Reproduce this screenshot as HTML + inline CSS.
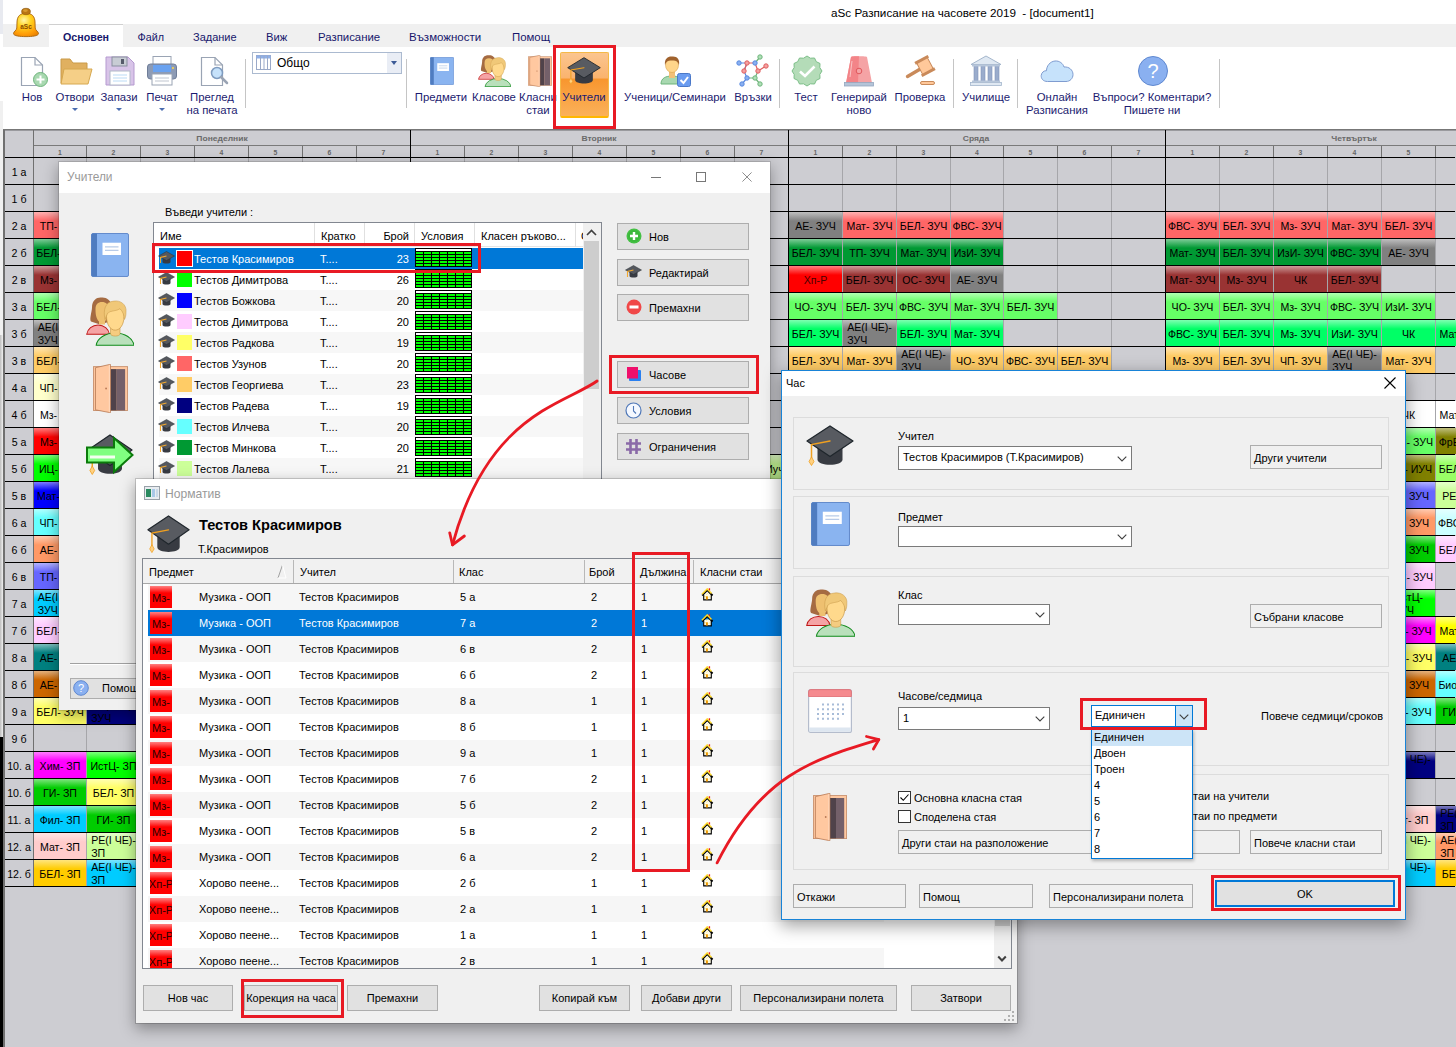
<!DOCTYPE html>
<html lang="bg"><head><meta charset="utf-8"><title>aSc Разписание на часовете 2019</title><style>
*{box-sizing:border-box;margin:0;padding:0}
html,body{width:1456px;height:1047px;overflow:hidden;background:#fff}
body{position:relative;font-family:"Liberation Sans",sans-serif;font-size:11px;color:#000}
.a{position:absolute}
.t{position:absolute;white-space:pre;line-height:1}
.rb{position:absolute;white-space:pre;line-height:13px;font-size:11.35px;color:#1b1b70;text-align:center;transform:translateX(-50%)}
.tab{position:absolute;top:24px;height:23px;line-height:27px;font-size:11.7px;color:#17176c;white-space:pre}
.sep{position:absolute;top:59px;height:49px;width:1px;background:#c5c5c5}
.gc{position:absolute;height:26px;padding-top:2px;font-size:10.6px;line-height:13px;color:#000;display:flex;align-items:center;justify-content:center;text-align:center;white-space:pre;overflow:hidden}
.gl{position:absolute;left:5px;width:28px;height:26px;font-size:10.6px;line-height:28px;text-align:center;white-space:pre}
.hl{position:absolute;background:#000;height:1px}
.btn{position:absolute;background:#e1e1e1;border:1px solid #adadad;font-size:11px;white-space:pre;display:flex;align-items:center}
.btnc{justify-content:center}
.dlg{position:absolute;background:#f0f0f0}
.combo{position:absolute;background:#fff;border:1px solid #7a7a7a;font-size:11px;white-space:pre}
.grp{position:absolute;border:1px solid #dcdcdc}
</style></head><body>
<div class="a" style="left:3px;top:129px;width:1453px;height:918px;background:#cdcdd2"></div>
<div class="a" style="left:0;top:101px;width:3px;height:234px;background:#f0f0f0;z-index:2"></div>
<div class="a" style="left:0;top:335px;width:3px;height:402px;background:linear-gradient(to right,#bdbdbd,#f0f0f0)"></div>
<div class="a" style="left:0;top:737px;width:3px;height:310px;background:#000"></div>
<div class="a" style="left:3px;top:129px;width:2px;height:918px;background:#707070"></div>
<div class="a" style="left:3px;top:129px;width:1453px;height:1px;background:#777"></div>
<div class="a" style="left:5px;top:130px;width:1451px;height:1px;background:#9a9a9e"></div>
<div class="a" style="left:33px;top:130px;width:1px;height:757px;background:#707070"></div>
<div class="a" style="left:34px;top:145px;width:1422px;height:1px;background:#7a7a7a"></div>
<div class="t" style="left:222px;top:136px;font-size:6.8px;font-weight:bold;color:#6a6a6a;transform:translateX(-50%) scaleX(1.25)">Понеделник</div>
<div class="a" style="left:410px;top:130px;width:1px;height:757px;background:#000"></div>
<div class="t" style="left:599px;top:136px;font-size:6.8px;font-weight:bold;color:#6a6a6a;transform:translateX(-50%) scaleX(1.25)">Вторник</div>
<div class="a" style="left:788px;top:130px;width:1px;height:757px;background:#000"></div>
<div class="t" style="left:976px;top:136px;font-size:6.8px;font-weight:bold;color:#6a6a6a;transform:translateX(-50%) scaleX(1.25)">Сряда</div>
<div class="a" style="left:1165px;top:130px;width:1px;height:757px;background:#000"></div>
<div class="t" style="left:1354px;top:136px;font-size:6.8px;font-weight:bold;color:#6a6a6a;transform:translateX(-50%) scaleX(1.25)">Четвъртък</div>
<div class="t" style="left:60px;top:150px;font-size:6.8px;font-weight:bold;color:#666;transform:translateX(-50%)">1</div>
<div class="a" style="left:86px;top:146px;width:1px;height:11px;background:#707070"></div>
<div class="a" style="left:86px;top:158px;width:1px;height:729px;background:#a6a6aa"></div>
<div class="t" style="left:113.5px;top:150px;font-size:6.8px;font-weight:bold;color:#666;transform:translateX(-50%)">2</div>
<div class="a" style="left:140px;top:146px;width:1px;height:11px;background:#707070"></div>
<div class="a" style="left:140px;top:158px;width:1px;height:729px;background:#a6a6aa"></div>
<div class="t" style="left:167.5px;top:150px;font-size:6.8px;font-weight:bold;color:#666;transform:translateX(-50%)">3</div>
<div class="a" style="left:194px;top:146px;width:1px;height:11px;background:#707070"></div>
<div class="a" style="left:194px;top:158px;width:1px;height:729px;background:#a6a6aa"></div>
<div class="t" style="left:221.5px;top:150px;font-size:6.8px;font-weight:bold;color:#666;transform:translateX(-50%)">4</div>
<div class="a" style="left:248px;top:146px;width:1px;height:11px;background:#707070"></div>
<div class="a" style="left:248px;top:158px;width:1px;height:729px;background:#a6a6aa"></div>
<div class="t" style="left:275.5px;top:150px;font-size:6.8px;font-weight:bold;color:#666;transform:translateX(-50%)">5</div>
<div class="a" style="left:302px;top:146px;width:1px;height:11px;background:#707070"></div>
<div class="a" style="left:302px;top:158px;width:1px;height:729px;background:#a6a6aa"></div>
<div class="t" style="left:329.5px;top:150px;font-size:6.8px;font-weight:bold;color:#666;transform:translateX(-50%)">6</div>
<div class="a" style="left:356px;top:146px;width:1px;height:11px;background:#707070"></div>
<div class="a" style="left:356px;top:158px;width:1px;height:729px;background:#a6a6aa"></div>
<div class="t" style="left:383.5px;top:150px;font-size:6.8px;font-weight:bold;color:#666;transform:translateX(-50%)">7</div>
<div class="t" style="left:437.5px;top:150px;font-size:6.8px;font-weight:bold;color:#666;transform:translateX(-50%)">1</div>
<div class="a" style="left:464px;top:146px;width:1px;height:11px;background:#707070"></div>
<div class="a" style="left:464px;top:158px;width:1px;height:729px;background:#a6a6aa"></div>
<div class="t" style="left:491.5px;top:150px;font-size:6.8px;font-weight:bold;color:#666;transform:translateX(-50%)">2</div>
<div class="a" style="left:518px;top:146px;width:1px;height:11px;background:#707070"></div>
<div class="a" style="left:518px;top:158px;width:1px;height:729px;background:#a6a6aa"></div>
<div class="t" style="left:545.5px;top:150px;font-size:6.8px;font-weight:bold;color:#666;transform:translateX(-50%)">3</div>
<div class="a" style="left:572px;top:146px;width:1px;height:11px;background:#707070"></div>
<div class="a" style="left:572px;top:158px;width:1px;height:729px;background:#a6a6aa"></div>
<div class="t" style="left:599.5px;top:150px;font-size:6.8px;font-weight:bold;color:#666;transform:translateX(-50%)">4</div>
<div class="a" style="left:626px;top:146px;width:1px;height:11px;background:#707070"></div>
<div class="a" style="left:626px;top:158px;width:1px;height:729px;background:#a6a6aa"></div>
<div class="t" style="left:653.5px;top:150px;font-size:6.8px;font-weight:bold;color:#666;transform:translateX(-50%)">5</div>
<div class="a" style="left:680px;top:146px;width:1px;height:11px;background:#707070"></div>
<div class="a" style="left:680px;top:158px;width:1px;height:729px;background:#a6a6aa"></div>
<div class="t" style="left:707.5px;top:150px;font-size:6.8px;font-weight:bold;color:#666;transform:translateX(-50%)">6</div>
<div class="a" style="left:734px;top:146px;width:1px;height:11px;background:#707070"></div>
<div class="a" style="left:734px;top:158px;width:1px;height:729px;background:#a6a6aa"></div>
<div class="t" style="left:761.5px;top:150px;font-size:6.8px;font-weight:bold;color:#666;transform:translateX(-50%)">7</div>
<div class="t" style="left:815.5px;top:150px;font-size:6.8px;font-weight:bold;color:#666;transform:translateX(-50%)">1</div>
<div class="a" style="left:842px;top:146px;width:1px;height:11px;background:#707070"></div>
<div class="a" style="left:842px;top:158px;width:1px;height:729px;background:#a6a6aa"></div>
<div class="t" style="left:869.5px;top:150px;font-size:6.8px;font-weight:bold;color:#666;transform:translateX(-50%)">2</div>
<div class="a" style="left:896px;top:146px;width:1px;height:11px;background:#707070"></div>
<div class="a" style="left:896px;top:158px;width:1px;height:729px;background:#a6a6aa"></div>
<div class="t" style="left:923.5px;top:150px;font-size:6.8px;font-weight:bold;color:#666;transform:translateX(-50%)">3</div>
<div class="a" style="left:950px;top:146px;width:1px;height:11px;background:#707070"></div>
<div class="a" style="left:950px;top:158px;width:1px;height:729px;background:#a6a6aa"></div>
<div class="t" style="left:977px;top:150px;font-size:6.8px;font-weight:bold;color:#666;transform:translateX(-50%)">4</div>
<div class="a" style="left:1003px;top:146px;width:1px;height:11px;background:#707070"></div>
<div class="a" style="left:1003px;top:158px;width:1px;height:729px;background:#a6a6aa"></div>
<div class="t" style="left:1030.5px;top:150px;font-size:6.8px;font-weight:bold;color:#666;transform:translateX(-50%)">5</div>
<div class="a" style="left:1057px;top:146px;width:1px;height:11px;background:#707070"></div>
<div class="a" style="left:1057px;top:158px;width:1px;height:729px;background:#a6a6aa"></div>
<div class="t" style="left:1084.5px;top:150px;font-size:6.8px;font-weight:bold;color:#666;transform:translateX(-50%)">6</div>
<div class="a" style="left:1111px;top:146px;width:1px;height:11px;background:#707070"></div>
<div class="a" style="left:1111px;top:158px;width:1px;height:729px;background:#a6a6aa"></div>
<div class="t" style="left:1138.5px;top:150px;font-size:6.8px;font-weight:bold;color:#666;transform:translateX(-50%)">7</div>
<div class="t" style="left:1192.5px;top:150px;font-size:6.8px;font-weight:bold;color:#666;transform:translateX(-50%)">1</div>
<div class="a" style="left:1219px;top:146px;width:1px;height:11px;background:#707070"></div>
<div class="a" style="left:1219px;top:158px;width:1px;height:729px;background:#a6a6aa"></div>
<div class="t" style="left:1246.5px;top:150px;font-size:6.8px;font-weight:bold;color:#666;transform:translateX(-50%)">2</div>
<div class="a" style="left:1273px;top:146px;width:1px;height:11px;background:#707070"></div>
<div class="a" style="left:1273px;top:158px;width:1px;height:729px;background:#a6a6aa"></div>
<div class="t" style="left:1300.5px;top:150px;font-size:6.8px;font-weight:bold;color:#666;transform:translateX(-50%)">3</div>
<div class="a" style="left:1327px;top:146px;width:1px;height:11px;background:#707070"></div>
<div class="a" style="left:1327px;top:158px;width:1px;height:729px;background:#a6a6aa"></div>
<div class="t" style="left:1354.5px;top:150px;font-size:6.8px;font-weight:bold;color:#666;transform:translateX(-50%)">4</div>
<div class="a" style="left:1381px;top:146px;width:1px;height:11px;background:#707070"></div>
<div class="a" style="left:1381px;top:158px;width:1px;height:729px;background:#a6a6aa"></div>
<div class="t" style="left:1408.5px;top:150px;font-size:6.8px;font-weight:bold;color:#666;transform:translateX(-50%)">5</div>
<div class="a" style="left:1435px;top:146px;width:1px;height:11px;background:#707070"></div>
<div class="a" style="left:1435px;top:158px;width:1px;height:729px;background:#a6a6aa"></div>
<div class="t" style="left:1462.5px;top:150px;font-size:6.8px;font-weight:bold;color:#666;transform:translateX(-50%)">6</div>
<div class="gc" style="left:34px;top:212px;width:52px;background:linear-gradient(to bottom,#ffb2b2 0,#ff6666 9px);color:#000;">ТП- ЗУЧ</div>
<div class="gc" style="left:789px;top:212px;width:53px;background:linear-gradient(to bottom,#bfbfbf 0,#808080 9px);color:#000;">АЕ- ЗУЧ</div>
<div class="gc" style="left:843px;top:212px;width:53px;background:linear-gradient(to bottom,#ffb2b2 0,#ff6666 9px);color:#000;">Мат- ЗУЧ</div>
<div class="gc" style="left:897px;top:212px;width:53px;background:linear-gradient(to bottom,#ffb2b2 0,#ff6666 9px);color:#000;">БЕЛ- ЗУЧ</div>
<div class="gc" style="left:951px;top:212px;width:52px;background:linear-gradient(to bottom,#ffb2b2 0,#ff6666 9px);color:#000;">ФВС- ЗУЧ</div>
<div class="gc" style="left:1166px;top:212px;width:53px;background:linear-gradient(to bottom,#ffb2b2 0,#ff6666 9px);color:#000;">ФВС- ЗУЧ</div>
<div class="gc" style="left:1220px;top:212px;width:53px;background:linear-gradient(to bottom,#ffb2b2 0,#ff6666 9px);color:#000;">БЕЛ- ЗУЧ</div>
<div class="gc" style="left:1274px;top:212px;width:53px;background:linear-gradient(to bottom,#ffb2b2 0,#ff6666 9px);color:#000;">Мз- ЗУЧ</div>
<div class="gc" style="left:1328px;top:212px;width:53px;background:linear-gradient(to bottom,#ffb2b2 0,#ff6666 9px);color:#000;">Мат- ЗУЧ</div>
<div class="gc" style="left:1382px;top:212px;width:53px;background:linear-gradient(to bottom,#ffb2b2 0,#ff6666 9px);color:#000;">БЕЛ- ЗУЧ</div>
<div class="gc" style="left:34px;top:239px;width:52px;background:linear-gradient(to bottom,#7fcc99 0,#009933 9px);color:#000;">БЕЛ- ЗУЧ</div>
<div class="gc" style="left:789px;top:239px;width:53px;background:linear-gradient(to bottom,#7fcc99 0,#009933 9px);color:#000;">БЕЛ- ЗУЧ</div>
<div class="gc" style="left:843px;top:239px;width:53px;background:linear-gradient(to bottom,#7fcc99 0,#009933 9px);color:#000;">ТП- ЗУЧ</div>
<div class="gc" style="left:897px;top:239px;width:53px;background:linear-gradient(to bottom,#7fcc99 0,#009933 9px);color:#000;">Мат- ЗУЧ</div>
<div class="gc" style="left:951px;top:239px;width:52px;background:linear-gradient(to bottom,#7fcc99 0,#009933 9px);color:#000;">ИзИ- ЗУЧ</div>
<div class="gc" style="left:1166px;top:239px;width:53px;background:linear-gradient(to bottom,#7fcc99 0,#009933 9px);color:#000;">Мат- ЗУЧ</div>
<div class="gc" style="left:1220px;top:239px;width:53px;background:linear-gradient(to bottom,#7fcc99 0,#009933 9px);color:#000;">БЕЛ- ЗУЧ</div>
<div class="gc" style="left:1274px;top:239px;width:53px;background:linear-gradient(to bottom,#7fcc99 0,#009933 9px);color:#000;">ИзИ- ЗУЧ</div>
<div class="gc" style="left:1328px;top:239px;width:53px;background:linear-gradient(to bottom,#7fcc99 0,#009933 9px);color:#000;">ФВС- ЗУЧ</div>
<div class="gc" style="left:1382px;top:239px;width:53px;background:linear-gradient(to bottom,#bfbfbf 0,#808080 9px);color:#000;">АЕ- ЗУЧ</div>
<div class="gc" style="left:34px;top:266px;width:52px;background:linear-gradient(to bottom,#cc9999 0,#993333 9px);color:#000;">Мз- ЗУЧ</div>
<div class="gc" style="left:789px;top:266px;width:53px;background:linear-gradient(to bottom,#ff7f7f 0,#ff0000 9px);color:#4a0000;">Хп-Р</div>
<div class="gc" style="left:843px;top:266px;width:53px;background:linear-gradient(to bottom,#cc9999 0,#993333 9px);color:#000;">БЕЛ- ЗУЧ</div>
<div class="gc" style="left:897px;top:266px;width:53px;background:linear-gradient(to bottom,#cc9999 0,#993333 9px);color:#000;">ОС- ЗУЧ</div>
<div class="gc" style="left:951px;top:266px;width:52px;background:linear-gradient(to bottom,#bfbfbf 0,#808080 9px);color:#000;">АЕ- ЗУЧ</div>
<div class="gc" style="left:1166px;top:266px;width:53px;background:linear-gradient(to bottom,#cc9999 0,#993333 9px);color:#000;">Мат- ЗУЧ</div>
<div class="gc" style="left:1220px;top:266px;width:53px;background:linear-gradient(to bottom,#cc9999 0,#993333 9px);color:#000;">Мз- ЗУЧ</div>
<div class="gc" style="left:1274px;top:266px;width:53px;background:linear-gradient(to bottom,#cc9999 0,#993333 9px);color:#000;">ЧК</div>
<div class="gc" style="left:1328px;top:266px;width:53px;background:linear-gradient(to bottom,#cc9999 0,#993333 9px);color:#000;">БЕЛ- ЗУЧ</div>
<div class="gc" style="left:34px;top:293px;width:52px;background:linear-gradient(to bottom,#b2ffb2 0,#66ff66 9px);color:#000;">БЕЛ- ЗУЧ</div>
<div class="gc" style="left:789px;top:293px;width:53px;background:linear-gradient(to bottom,#b2ffb2 0,#66ff66 9px);color:#000;">ЧО- ЗУЧ</div>
<div class="gc" style="left:843px;top:293px;width:53px;background:linear-gradient(to bottom,#b2ffb2 0,#66ff66 9px);color:#000;">БЕЛ- ЗУЧ</div>
<div class="gc" style="left:897px;top:293px;width:53px;background:linear-gradient(to bottom,#b2ffb2 0,#66ff66 9px);color:#000;">ФВС- ЗУЧ</div>
<div class="gc" style="left:951px;top:293px;width:52px;background:linear-gradient(to bottom,#b2ffb2 0,#66ff66 9px);color:#000;">Мат- ЗУЧ</div>
<div class="gc" style="left:1004px;top:293px;width:53px;background:linear-gradient(to bottom,#b2ffb2 0,#66ff66 9px);color:#000;">БЕЛ- ЗУЧ</div>
<div class="gc" style="left:1166px;top:293px;width:53px;background:linear-gradient(to bottom,#b2ffb2 0,#66ff66 9px);color:#000;">ЧО- ЗУЧ</div>
<div class="gc" style="left:1220px;top:293px;width:53px;background:linear-gradient(to bottom,#b2ffb2 0,#66ff66 9px);color:#000;">БЕЛ- ЗУЧ</div>
<div class="gc" style="left:1274px;top:293px;width:53px;background:linear-gradient(to bottom,#b2ffb2 0,#66ff66 9px);color:#000;">Мз- ЗУЧ</div>
<div class="gc" style="left:1328px;top:293px;width:53px;background:linear-gradient(to bottom,#b2ffb2 0,#66ff66 9px);color:#000;">ФВС- ЗУЧ</div>
<div class="gc" style="left:1382px;top:293px;width:53px;background:linear-gradient(to bottom,#b2ffb2 0,#66ff66 9px);color:#000;">ИзИ- ЗУЧ</div>
<div class="gc" style="left:34px;top:320px;width:52px;background:linear-gradient(to bottom,#bfbfbf 0,#808080 9px);color:#000;text-align:left;">АЕ(I ЧЕ)-
ЗУЧ</div>
<div class="gc" style="left:789px;top:320px;width:53px;background:linear-gradient(to bottom,#7fffb2 0,#00ff66 9px);color:#000;">БЕЛ- ЗУЧ</div>
<div class="gc" style="left:843px;top:320px;width:53px;background:linear-gradient(to bottom,#bfbfbf 0,#808080 9px);color:#000;text-align:left;">АЕ(I ЧЕ)-
ЗУЧ</div>
<div class="gc" style="left:897px;top:320px;width:53px;background:linear-gradient(to bottom,#7fffb2 0,#00ff66 9px);color:#000;">БЕЛ- ЗУЧ</div>
<div class="gc" style="left:951px;top:320px;width:52px;background:linear-gradient(to bottom,#7fffb2 0,#00ff66 9px);color:#000;">Мат- ЗУЧ</div>
<div class="gc" style="left:1166px;top:320px;width:53px;background:linear-gradient(to bottom,#7fffb2 0,#00ff66 9px);color:#000;">ФВС- ЗУЧ</div>
<div class="gc" style="left:1220px;top:320px;width:53px;background:linear-gradient(to bottom,#7fffb2 0,#00ff66 9px);color:#000;">БЕЛ- ЗУЧ</div>
<div class="gc" style="left:1274px;top:320px;width:53px;background:linear-gradient(to bottom,#7fffb2 0,#00ff66 9px);color:#000;">Мз- ЗУЧ</div>
<div class="gc" style="left:1328px;top:320px;width:53px;background:linear-gradient(to bottom,#7fffb2 0,#00ff66 9px);color:#000;">ИзИ- ЗУЧ</div>
<div class="gc" style="left:1382px;top:320px;width:53px;background:linear-gradient(to bottom,#7fffb2 0,#00ff66 9px);color:#000;">ЧК</div>
<div class="gc" style="left:1436px;top:320px;width:53px;background:linear-gradient(to bottom,#7fffb2 0,#00ff66 9px);color:#000;">Мат- ЗУЧ</div>
<div class="gc" style="left:34px;top:347px;width:52px;background:linear-gradient(to bottom,#ffe5b2 0,#ffcc66 9px);color:#000;">БЕЛ- ЗУЧ</div>
<div class="gc" style="left:789px;top:347px;width:53px;background:linear-gradient(to bottom,#ffe5b2 0,#ffcc66 9px);color:#000;">БЕЛ- ЗУЧ</div>
<div class="gc" style="left:843px;top:347px;width:53px;background:linear-gradient(to bottom,#ffe5b2 0,#ffcc66 9px);color:#000;">Мат- ЗУЧ</div>
<div class="gc" style="left:897px;top:347px;width:53px;background:linear-gradient(to bottom,#bfbfbf 0,#808080 9px);color:#000;text-align:left;">АЕ(I ЧЕ)-
ЗУЧ</div>
<div class="gc" style="left:951px;top:347px;width:52px;background:linear-gradient(to bottom,#ffe5b2 0,#ffcc66 9px);color:#000;">ЧО- ЗУЧ</div>
<div class="gc" style="left:1004px;top:347px;width:53px;background:linear-gradient(to bottom,#ffe5b2 0,#ffcc66 9px);color:#000;">ФВС- ЗУЧ</div>
<div class="gc" style="left:1058px;top:347px;width:53px;background:linear-gradient(to bottom,#ffe5b2 0,#ffcc66 9px);color:#000;">БЕЛ- ЗУЧ</div>
<div class="gc" style="left:1166px;top:347px;width:53px;background:linear-gradient(to bottom,#ffe5b2 0,#ffcc66 9px);color:#000;">Мз- ЗУЧ</div>
<div class="gc" style="left:1220px;top:347px;width:53px;background:linear-gradient(to bottom,#ffe5b2 0,#ffcc66 9px);color:#000;">БЕЛ- ЗУЧ</div>
<div class="gc" style="left:1274px;top:347px;width:53px;background:linear-gradient(to bottom,#ffe5b2 0,#ffcc66 9px);color:#000;">ЧП- ЗУЧ</div>
<div class="gc" style="left:1328px;top:347px;width:53px;background:linear-gradient(to bottom,#bfbfbf 0,#808080 9px);color:#000;text-align:left;">АЕ(I ЧЕ)-
ЗУЧ</div>
<div class="gc" style="left:1382px;top:347px;width:53px;background:linear-gradient(to bottom,#ffe5b2 0,#ffcc66 9px);color:#000;">Мат- ЗУЧ</div>
<div class="gc" style="left:34px;top:374px;width:52px;background:linear-gradient(to bottom,#ffffe5 0,#ffffcc 9px);color:#000;">ЧП- ЗУЧ</div>
<div class="gc" style="left:34px;top:401px;width:52px;background:linear-gradient(to bottom,#ffffff 0,#ffffff 9px);color:#000;">Мз- ЗУЧ</div>
<div class="gc" style="left:1382px;top:401px;width:53px;background:linear-gradient(to bottom,#ffffff 0,#ffffff 9px);color:#000;">ЧК</div>
<div class="gc" style="left:1436px;top:401px;width:53px;background:linear-gradient(to bottom,#ffffff 0,#ffffff 9px);color:#000;">Мат- ЗУЧ</div>
<div class="gc" style="left:34px;top:428px;width:52px;background:linear-gradient(to bottom,#ff7f7f 0,#ff0000 9px);color:#000;">Мз- ЗУЧ</div>
<div class="gc" style="left:1382px;top:428px;width:53px;background:linear-gradient(to bottom,#b2ffb2 0,#66ff66 9px);color:#000;">ФВС- ЗУЧ</div>
<div class="gc" style="left:1436px;top:428px;width:53px;background:linear-gradient(to bottom,#bfbf7f 0,#808000 9px);color:#000;">ФрЕ- ЗУЧ</div>
<div class="gc" style="left:34px;top:455px;width:52px;background:linear-gradient(to bottom,#7fff7f 0,#00ff00 9px);color:#000;">ИЦ- ЗУЧ</div>
<div class="gc" style="left:735px;top:455px;width:53px;background:linear-gradient(to bottom,#e5ffcc 0,#ccff99 9px);color:#000;">Мат- Иуч</div>
<div class="gc" style="left:1382px;top:455px;width:53px;background:linear-gradient(to bottom,#bfbf7f 0,#808000 9px);color:#000;">Мат- ИУЧ</div>
<div class="gc" style="left:1436px;top:455px;width:53px;background:linear-gradient(to bottom,#ccffb2 0,#99ff66 9px);color:#000;">БЕЛ- ЗУЧ</div>
<div class="gc" style="left:34px;top:482px;width:52px;background:linear-gradient(to bottom,#7f7fff 0,#0000ff 9px);color:#000;">Мат- ЗУЧ</div>
<div class="gc" style="left:1382px;top:482px;width:53px;background:linear-gradient(to bottom,#b2b2ff 0,#6666ff 9px);color:#000;justify-content:flex-end;padding-right:6px;">БЕЛ-  ЗУЧ</div>
<div class="gc" style="left:1436px;top:482px;width:53px;background:linear-gradient(to bottom,#e5ffcc 0,#ccff99 9px);color:#000;">РЕ- ЗУЧ</div>
<div class="gc" style="left:34px;top:509px;width:52px;background:linear-gradient(to bottom,#b2ffff 0,#66ffff 9px);color:#000;">ЧП- ЗУЧ</div>
<div class="gc" style="left:1382px;top:509px;width:53px;background:linear-gradient(to bottom,#ffccb2 0,#ff9966 9px);color:#000;justify-content:flex-end;padding-right:6px;">БЕЛ-  ЗУЧ</div>
<div class="gc" style="left:1436px;top:509px;width:53px;background:linear-gradient(to bottom,#e5ffff 0,#ccffff 9px);color:#000;">ФВС- ЗУЧ</div>
<div class="gc" style="left:34px;top:536px;width:52px;background:linear-gradient(to bottom,#ffccb2 0,#ff9966 9px);color:#000;">АЕ- ЗУЧ</div>
<div class="gc" style="left:1382px;top:536px;width:53px;background:linear-gradient(to bottom,#7fe57f 0,#00cc00 9px);color:#000;justify-content:flex-end;padding-right:6px;">БЕЛ-  ЗУЧ</div>
<div class="gc" style="left:1436px;top:536px;width:53px;background:linear-gradient(to bottom,#ffe5ff 0,#ffccff 9px);color:#000;">БЕЛ- ЗУЧ</div>
<div class="gc" style="left:34px;top:563px;width:52px;background:linear-gradient(to bottom,#b2b2ff 0,#6666ff 9px);color:#000;">ТП- ЗУЧ</div>
<div class="gc" style="left:1382px;top:563px;width:53px;background:linear-gradient(to bottom,#ffe5ff 0,#ffccff 9px);color:#000;">ФВС- ЗУЧ</div>
<div class="gc" style="left:34px;top:590px;width:52px;background:linear-gradient(to bottom,#7fe5ff 0,#00ccff 9px);color:#000;text-align:left;">АЕ(I ЧЕ)-
ЗУЧ</div>
<div class="gc" style="left:1382px;top:590px;width:53px;background:linear-gradient(to bottom,#7fff7f 0,#00ff00 9px);color:#000;text-align:left;">ИстЦ-
ЗУЧ</div>
<div class="gc" style="left:34px;top:617px;width:52px;background:linear-gradient(to bottom,#ffe5ff 0,#ffccff 9px);color:#000;">БЕЛ- ЗУЧ</div>
<div class="gc" style="left:1382px;top:617px;width:53px;background:linear-gradient(to bottom,#ff7fff 0,#ff00ff 9px);color:#000;">Мат- ЗУЧ</div>
<div class="gc" style="left:1436px;top:617px;width:53px;background:linear-gradient(to bottom,#ffff7f 0,#ffff00 9px);color:#000;">Мат- ЗУЧ</div>
<div class="gc" style="left:34px;top:644px;width:52px;background:linear-gradient(to bottom,#7fbfbf 0,#008080 9px);color:#000;">АЕ- ЗУЧ</div>
<div class="gc" style="left:1382px;top:644px;width:53px;background:linear-gradient(to bottom,#ffffb2 0,#ffff66 9px);color:#000;">БЕЛ- ЗУЧ</div>
<div class="gc" style="left:1436px;top:644px;width:53px;background:linear-gradient(to bottom,#7fbfbf 0,#008080 9px);color:#000;">АЕ- ЗУЧ</div>
<div class="gc" style="left:34px;top:671px;width:52px;background:linear-gradient(to bottom,#e5b27f 0,#cc6600 9px);color:#000;">АЕ- ЗУЧ</div>
<div class="gc" style="left:1382px;top:671px;width:53px;background:linear-gradient(to bottom,#e5b27f 0,#cc6600 9px);color:#000;justify-content:flex-end;padding-right:6px;">БЕЛ-  ЗУЧ</div>
<div class="gc" style="left:1436px;top:671px;width:53px;background:linear-gradient(to bottom,#b2ffff 0,#66ffff 9px);color:#000;">Био.- ЗУЧ</div>
<div class="gc" style="left:34px;top:698px;width:52px;background:linear-gradient(to bottom,#ffffb2 0,#ffff66 9px);color:#000;">БЕЛ- ЗУЧ</div>
<div class="gc" style="left:87px;top:698px;width:53px;background:linear-gradient(to bottom,#7f7fbf 0,#000080 9px);color:#000;text-align:left;">АЕ(I ЧЕ)-
ЗУЧ</div>
<div class="gc" style="left:1382px;top:698px;width:53px;background:linear-gradient(to bottom,#b2ffff 0,#66ffff 9px);color:#000;">Мат- ЗУЧ</div>
<div class="gc" style="left:1436px;top:698px;width:53px;background:linear-gradient(to bottom,#7fe57f 0,#00cc00 9px);color:#000;">ГИ- ЗУЧ</div>
<div class="gc" style="left:34px;top:752px;width:52px;background:linear-gradient(to bottom,#ff7fff 0,#ff00ff 9px);color:#000;">Хим- ЗП</div>
<div class="gc" style="left:87px;top:752px;width:53px;background:linear-gradient(to bottom,#7fff7f 0,#00ff00 9px);color:#000;">ИстЦ- ЗП</div>
<div class="gc" style="left:141px;top:752px;width:53px;background:linear-gradient(to bottom,#ff7fff 0,#ff00ff 9px);color:#000;">Мат- ЗП</div>
<div class="gc" style="left:1382px;top:752px;width:53px;background:linear-gradient(to bottom,#7f7fbf 0,#000080 9px);color:#000;text-align:left;">РЕ(I ЧЕ)-
ЗП</div>
<div class="gc" style="left:34px;top:779px;width:52px;background:linear-gradient(to bottom,#7fe57f 0,#00cc00 9px);color:#000;">ГИ- ЗП</div>
<div class="gc" style="left:87px;top:779px;width:53px;background:linear-gradient(to bottom,#ffffb2 0,#ffff66 9px);color:#000;">БЕЛ- ЗП</div>
<div class="gc" style="left:34px;top:806px;width:52px;background:linear-gradient(to bottom,#7fe5ff 0,#00ccff 9px);color:#000;">Фил- ЗП</div>
<div class="gc" style="left:87px;top:806px;width:53px;background:linear-gradient(to bottom,#7fe57f 0,#00cc00 9px);color:#000;">ГИ- ЗП</div>
<div class="gc" style="left:1382px;top:806px;width:53px;background:linear-gradient(to bottom,#ffe5e5 0,#ffcccc 9px);color:#000;">Мат- ЗП</div>
<div class="gc" style="left:1436px;top:806px;width:53px;background:linear-gradient(to bottom,#7f7fbf 0,#000080 9px);color:#000;text-align:left;">РЕ(I ЧЕ)-
ЗП</div>
<div class="gc" style="left:34px;top:833px;width:52px;background:linear-gradient(to bottom,#ffe5e5 0,#ffcccc 9px);color:#000;">Мат- ЗП</div>
<div class="gc" style="left:87px;top:833px;width:53px;background:linear-gradient(to bottom,#e5ffcc 0,#ccff99 9px);color:#000;text-align:left;">РЕ(I ЧЕ)-
ЗП</div>
<div class="gc" style="left:1382px;top:833px;width:53px;background:linear-gradient(to bottom,#e5ffcc 0,#ccff99 9px);color:#000;text-align:left;">РЕ(I ЧЕ)-
ЗП</div>
<div class="gc" style="left:1436px;top:833px;width:53px;background:linear-gradient(to bottom,#ffccb2 0,#ff9966 9px);color:#000;text-align:left;">АЕ(I ЧЕ)-
ЗП</div>
<div class="gc" style="left:34px;top:860px;width:52px;background:linear-gradient(to bottom,#ffe57f 0,#ffcc00 9px);color:#000;">БЕЛ- ЗП</div>
<div class="gc" style="left:87px;top:860px;width:53px;background:linear-gradient(to bottom,#7fe5ff 0,#00ccff 9px);color:#000;text-align:left;">АЕ(I ЧЕ)-
ЗП</div>
<div class="gc" style="left:1382px;top:860px;width:53px;background:linear-gradient(to bottom,#7fe5ff 0,#00ccff 9px);color:#000;text-align:left;">АЕ(I ЧЕ)-
ЗП</div>
<div class="gc" style="left:1436px;top:860px;width:53px;background:linear-gradient(to bottom,#ffe57f 0,#ffcc00 9px);color:#000;">БЕЛ- ЗП</div>
<div class="a" style="left:5px;top:131px;width:28px;height:26px;background:#cdcdd2"></div>
<div class="hl" style="left:5px;top:157px;width:1450px"></div>
<div class="hl" style="left:5px;top:184px;width:1450px"></div>
<div class="hl" style="left:5px;top:211px;width:1450px"></div>
<div class="hl" style="left:5px;top:238px;width:1450px"></div>
<div class="hl" style="left:5px;top:265px;width:1450px"></div>
<div class="hl" style="left:5px;top:292px;width:1450px"></div>
<div class="hl" style="left:5px;top:319px;width:1450px"></div>
<div class="hl" style="left:5px;top:346px;width:1450px"></div>
<div class="hl" style="left:5px;top:373px;width:1450px"></div>
<div class="hl" style="left:5px;top:400px;width:1450px"></div>
<div class="hl" style="left:5px;top:427px;width:1450px"></div>
<div class="hl" style="left:5px;top:454px;width:1450px"></div>
<div class="hl" style="left:5px;top:481px;width:1450px"></div>
<div class="hl" style="left:5px;top:508px;width:1450px"></div>
<div class="hl" style="left:5px;top:535px;width:1450px"></div>
<div class="hl" style="left:5px;top:562px;width:1450px"></div>
<div class="hl" style="left:5px;top:589px;width:1450px"></div>
<div class="hl" style="left:5px;top:616px;width:1450px"></div>
<div class="hl" style="left:5px;top:643px;width:1450px"></div>
<div class="hl" style="left:5px;top:670px;width:1450px"></div>
<div class="hl" style="left:5px;top:697px;width:1450px"></div>
<div class="hl" style="left:5px;top:724px;width:1450px"></div>
<div class="hl" style="left:5px;top:751px;width:1450px"></div>
<div class="hl" style="left:5px;top:778px;width:1450px"></div>
<div class="hl" style="left:5px;top:805px;width:1450px"></div>
<div class="hl" style="left:5px;top:832px;width:1450px"></div>
<div class="hl" style="left:5px;top:859px;width:1450px"></div>
<div class="hl" style="left:5px;top:886px;width:1450px"></div>
<div class="gl" style="top:158px;background:#cdcdd2">1 а</div>
<div class="gl" style="top:185px;background:#cdcdd2">1 б</div>
<div class="gl" style="top:212px;background:#cdcdd2">2 а</div>
<div class="gl" style="top:239px;background:#cdcdd2">2 б</div>
<div class="gl" style="top:266px;background:#cdcdd2">2 в</div>
<div class="gl" style="top:293px;background:#cdcdd2">3 а</div>
<div class="gl" style="top:320px;background:#cdcdd2">3 б</div>
<div class="gl" style="top:347px;background:#cdcdd2">3 в</div>
<div class="gl" style="top:374px;background:#cdcdd2">4 а</div>
<div class="gl" style="top:401px;background:#cdcdd2">4 б</div>
<div class="gl" style="top:428px;background:#cdcdd2">5 а</div>
<div class="gl" style="top:455px;background:#cdcdd2">5 б</div>
<div class="gl" style="top:482px;background:#cdcdd2">5 в</div>
<div class="gl" style="top:509px;background:#cdcdd2">6 а</div>
<div class="gl" style="top:536px;background:#cdcdd2">6 б</div>
<div class="gl" style="top:563px;background:#cdcdd2">6 в</div>
<div class="gl" style="top:590px;background:#cdcdd2">7 а</div>
<div class="gl" style="top:617px;background:#cdcdd2">7 б</div>
<div class="gl" style="top:644px;background:#cdcdd2">8 а</div>
<div class="gl" style="top:671px;background:#cdcdd2">8 б</div>
<div class="gl" style="top:698px;background:#cdcdd2">9 а</div>
<div class="gl" style="top:725px;background:#cdcdd2">9 б</div>
<div class="gl" style="top:752px;background:#cdcdd2">10. а</div>
<div class="gl" style="top:779px;background:#cdcdd2">10. б</div>
<div class="gl" style="top:806px;background:#cdcdd2">11. а</div>
<div class="gl" style="top:833px;background:#cdcdd2">12. а</div>
<div class="gl" style="top:860px;background:#cdcdd2">12. б</div>
<div class="a" style="left:0;top:0;width:1456px;height:24px;background:#fff"></div>
<div class="t" style="left:831px;top:7px;font-size:11.7px;color:#000">aSc Разписание на часовете 2019  - [document1]</div>
<div class="a" style="left:3px;top:24px;width:1453px;height:23px;background:#f0f0f0"></div>
<div class="a" style="left:0;top:0;width:3px;height:34px;background:#e8eaf0"></div>
<div class="a" style="left:49px;top:24px;width:74px;height:24px;background:#fff;border-top:1px solid #d0d0d0"></div>
<div class="tab" style="left:63px;font-size:10.7px;font-weight:bold;">Основен</div>
<div class="tab" style="left:137.5px;font-size:10.8px;">Файл</div>
<div class="tab" style="left:193px;font-size:11px;">Задание</div>
<div class="tab" style="left:266px;font-size:11.2px;">Виж</div>
<div class="tab" style="left:318px;font-size:11.4px;">Разписание</div>
<div class="tab" style="left:409px;font-size:11.5px;">Възможности</div>
<div class="tab" style="left:512px;font-size:11.4px;">Помощ</div>
<div class="a" style="left:0;top:47px;width:1456px;height:82px;background:#fff"></div>
<svg class="a" style="left:12px;top:6px" width="30" height="32" viewBox="0 0 30 32">
<defs><radialGradient id="bg1" cx="0.42" cy="0.3" r="0.8"><stop offset="0" stop-color="#fff6a8"/><stop offset="0.35" stop-color="#ffd21e"/><stop offset="0.75" stop-color="#ff9c08"/><stop offset="1" stop-color="#e88000"/></radialGradient></defs>
<path d="M14 7.2C8 7.2 5.2 10.5 5 16L4.8 22C4.6 24.5 1.6 25.5 1.5 27.5C1.5 30 8 30.6 14 30.6C20 30.6 26.5 30 26.5 27.5C26.4 25.5 23.4 24.5 23.2 22L23 16C22.8 10.5 20 7.2 14 7.2Z" fill="url(#bg1)" stroke="#a8640c" stroke-width="0.9"/>
<ellipse cx="14" cy="5.5" rx="4.4" ry="3.2" fill="#b87414" stroke="#8a5408" stroke-width="0.6"/>
<ellipse cx="13.4" cy="4.6" rx="2.4" ry="1.3" fill="#d89a30"/>
<text x="14" y="22.8" font-size="6.5" font-family="Liberation Sans" fill="#8a4a00" text-anchor="middle" font-weight="bold">aSc</text>
</svg>
<div class="a" style="left:560px;top:52px;width:49px;height:66px;border-radius:2px;background:linear-gradient(to bottom,#fbc58f 0,#fab36e 40%,#f8962e 41%,#fbb15a 100%);border:1px solid #f5b948;border-bottom:2px solid #ffb700"></div>
<div class="sep" style="left:245px"></div>
<div class="sep" style="left:406px"></div>
<div class="sep" style="left:779px"></div>
<div class="sep" style="left:953px"></div>
<div class="sep" style="left:1017px"></div>
<div class="sep" style="left:1219px"></div>
<div class="a" style="left:252px;top:52px;width:150px;height:22px;background:#fff;border:1px solid #abbad0"></div>
<div class="a" style="left:387px;top:53px;width:14px;height:20px;background:#e9edf5"></div>
<div class="a" style="left:391px;top:61px;width:0;height:0;border-left:3px solid transparent;border-right:3px solid transparent;border-top:4px solid #3c5a96"></div>
<svg class="a" style="left:256px;top:55px" width="15" height="15" viewBox="0 0 15 15"><rect x="0.5" y="0.5" width="14" height="14" fill="#fff" stroke="#9aa9c8"/><rect x="0.5" y="0.5" width="14" height="3" fill="#8fb0e8"/><path d="M4.5 1V14M8 1V14M11.5 1V14" stroke="#9aa9c8" stroke-width="1"/></svg>
<div class="t" style="left:277px;top:57px;font-size:12px;color:#000">Общо</div>
<div class="rb" style="left:32px;top:91px">Нов</div>
<div class="rb" style="left:75px;top:91px">Отвори</div>
<div class="rb" style="left:119px;top:91px">Запази</div>
<div class="rb" style="left:162px;top:91px">Печат</div>
<div class="rb" style="left:212px;top:91px">Преглед
на печата</div>
<div class="rb" style="left:441px;top:91px">Предмети</div>
<div class="rb" style="left:494px;top:91px">Класове</div>
<div class="rb" style="left:538px;top:91px">Класни
стаи</div>
<div class="rb" style="left:584px;top:91px">Учители</div>
<div class="rb" style="left:675px;top:91px">Ученици/Семинари</div>
<div class="rb" style="left:753px;top:91px">Връзки</div>
<div class="rb" style="left:806px;top:91px">Тест</div>
<div class="rb" style="left:859px;top:91px">Генерирай
ново</div>
<div class="rb" style="left:920px;top:91px">Проверка</div>
<div class="rb" style="left:986px;top:91px">Училище</div>
<div class="rb" style="left:1057px;top:91px">Онлайн
Разписания</div>
<div class="rb" style="left:1152px;top:91px">Въпроси? Коментари?
Пишете ни</div>
<div class="a" style="left:72px;top:108px;width:0;height:0;border-left:3px solid transparent;border-right:3px solid transparent;border-top:3px solid #4a6cb0"></div>
<div class="a" style="left:116px;top:108px;width:0;height:0;border-left:3px solid transparent;border-right:3px solid transparent;border-top:3px solid #4a6cb0"></div>
<div class="a" style="left:159px;top:108px;width:0;height:0;border-left:3px solid transparent;border-right:3px solid transparent;border-top:3px solid #4a6cb0"></div>
<svg class="a" style="left:20px;top:55px" width="30" height="33" viewBox="0 0 30 33"><path d="M1.5 2.5H15L22.5 10V30.5H1.5Z" fill="#fff" stroke="#9aa4b4" stroke-width="1.2"/><path d="M15 2.5V10H22.5" fill="none" stroke="#9aa4b4" stroke-width="1.2"/><circle cx="20.5" cy="24.5" r="7" fill="#a8d8b0" stroke="#6fb57c"/><path d="M20.5 20.5V28.5M16.5 24.5H24.5" stroke="#fff" stroke-width="2"/></svg>
<svg class="a" style="left:59px;top:56px" width="34" height="30" viewBox="0 0 34 30"><path d="M2 3H11L14 7H28V27H2Z" fill="#e0b060" stroke="#c99a48"/><path d="M5 13H33L29 28H2Z" fill="#f5cf87" stroke="#d6a850"/></svg>
<svg class="a" style="left:104px;top:55px" width="32" height="32" viewBox="0 0 32 32"><path d="M2 2H24L30 8V30H2Z" fill="#d8c4e8" stroke="#b59ad0"/><rect x="8" y="2" width="15" height="9" fill="#c8ccd4" stroke="#8a8fa0"/><rect x="17" y="4" width="3" height="5" fill="#555a6a"/><rect x="6" y="16" width="20" height="14" fill="#fff" stroke="#b0b8c8"/><path d="M9 20H23M9 23H23M9 26H23" stroke="#bcdcf6" stroke-width="1.2"/></svg>
<svg class="a" style="left:146px;top:55px" width="32" height="32" viewBox="0 0 32 32"><rect x="7" y="1.5" width="18" height="9" fill="#fff" stroke="#9aa4b4"/><rect x="1.5" y="9" width="29" height="15" rx="3" fill="#8d9bb5" stroke="#6f7d98"/><rect x="7" y="10" width="18" height="7" fill="#6aa2f0"/><circle cx="27" cy="13" r="1" fill="#ffd84a"/><rect x="6" y="19" width="20" height="11" fill="#fff" stroke="#9aa4b4"/><path d="M9 23H23M9 26H23" stroke="#c0c6d0" stroke-width="1.2"/></svg>
<svg class="a" style="left:200px;top:55px" width="30" height="33" viewBox="0 0 30 33"><path d="M1.5 2.5H15L22.5 10V30.5H1.5Z" fill="#fff" stroke="#9aa4b4" stroke-width="1.2"/><path d="M15 2.5V10H22.5" fill="none" stroke="#9aa4b4" stroke-width="1.2"/><circle cx="17" cy="18" r="5.5" fill="#c6e2fb" stroke="#7f9cc0" stroke-width="1.5"/><path d="M21 22L27 28" stroke="#9aa4b4" stroke-width="2.5" stroke-linecap="round"/></svg>
<svg class="a" style="left:430px;top:57px" width="24" height="28" viewBox="0 0 38 43" preserveAspectRatio="none"><rect x="0.5" y="0.5" width="37" height="42" rx="1.5" fill="#8ab4f0" stroke="#5b84c8" stroke-width="0.9"/><path d="M0.5 2C0.5 1 1 0.5 2 0.5H6V42.5H2C1 42.5 0.5 42 0.5 41Z" fill="#4f7cc0"/><rect x="11.5" y="9.5" width="18.5" height="12" fill="#fff"/><path d="M14 13.5H27.5M14 17H27.5" stroke="#b8cbe8" stroke-width="1.2"/></svg>
<svg class="a" style="left:478px;top:55px" width="33" height="32" viewBox="0 0 48 48" preserveAspectRatio="none">
<path d="M0.7 36.5A11.5 10.5 0 0 1 23.5 36.5Z" fill="#f5a3a5" stroke="#c01818" stroke-width="1"/>
<path d="M5 24C3 22 6 14 6 10C6 3 11 0 15.5 0.5C20 0 25 3 26 9L24 24L14 27Z" fill="#a56b42"/>
<path d="M9.5 12C9.5 7 12 5 16 5C20 5 22.5 7 22.5 12C22.5 19 20 22 19 24V27H13V24C11 22 9.5 19 9.5 12Z" fill="#eec070"/>
<path d="M10.2 47.3A19 13.5 0 0 1 48 47.3Z" fill="#b9e0bb" stroke="#0f8a1a" stroke-width="1"/>
<path d="M24.5 30H34V36C34 39 24.5 39 24.5 36Z" fill="#f5cc80" stroke="#c89848" stroke-width="0.6"/>
<path d="M20.5 19C20.5 12 24 10.5 29 10.5C34 10.5 38 12 38 19C38 27 34 32.5 29.2 32.5C24.5 32.5 20.5 27 20.5 19Z" fill="#ffd98c" stroke="#c89848" stroke-width="0.7"/>
<path d="M19 22C17 13 19 4.5 28 4C34 3 41 7 40 15C40 18 39.5 20 38.5 22C38 17 36.5 14 34 11.5C31 14 24 13 21.5 16C20.5 18 20 20 19 22Z" fill="#f0c878" stroke="#c89848" stroke-width="0.5"/>
</svg>
<svg class="a" style="left:528px;top:55px" width="24" height="32" viewBox="0 0 34 48" preserveAspectRatio="none"><rect x="0.4" y="2.6" width="33.2" height="43" fill="#ffc8a0" stroke="#c48a66" stroke-width="0.8"/><rect x="17" y="5" width="6" height="40.5" fill="#50424a"/><rect x="23" y="5" width="8.2" height="40.5" fill="#74606a"/><path d="M2.4 3.6L16.9 0.3V47.7L2.4 44.9Z" fill="#ffc8a0" stroke="#b87a56" stroke-width="0.8" stroke-linejoin="round"/><path d="M15.9 0.8V47.3" stroke="#ffd9bd" stroke-width="1"/><circle cx="12.7" cy="24" r="0.9" fill="#b87a56"/></svg>
<svg class="a" style="left:567px;top:57px" width="34" height="28" viewBox="0 0 48 42" preserveAspectRatio="none"><path d="M11.5 20V34.5C11.5 41.5 36.5 41.5 36.5 34.5V20Z" fill="#383b42"/><path d="M24 1L47 16L24 31.5L1 16Z" fill="#585b61" stroke="#1f262c" stroke-width="1.3" stroke-linejoin="round"/><path d="M24 16L5.5 19.5V33" fill="none" stroke="#f0a020" stroke-width="1.5" stroke-linecap="round"/><path d="M5.5 32L3 36.5L5.5 40.5L8 36.5Z" fill="#ffd080" stroke="#f0a020" stroke-width="0.8"/></svg>
<svg class="a" style="left:659px;top:55px" width="34" height="34" viewBox="0 0 34 34"><path d="M2 29C2 23 7 21 13 21C19 21 24 23 24 29Z" fill="#a8d8b0" stroke="#6fb57c"/><rect x="10" y="16" width="6" height="7" fill="#f2c078"/><ellipse cx="13" cy="10" rx="6.5" ry="7.5" fill="#ffd58a" stroke="#d9a24e" stroke-width="0.6"/><path d="M6 10C5 3 10 1 13 1.5C18 1 21 4 20 10C19 6 16 5 13 5.5C10 5 7 6 6 10Z" fill="#a0622d"/><rect x="18.5" y="18.5" width="13" height="13" rx="2" fill="#6a9cf0" stroke="#4a78c8"/><path d="M21.5 25L24.5 28L29 22" fill="none" stroke="#fff" stroke-width="2"/></svg>
<svg class="a" style="left:736px;top:54px" width="34" height="34" viewBox="0 0 34 34">
<g stroke-width="1.2" fill="none"><path d="M3 9L11 9M11 9L8 17M8 17L11 24M11 24L6 30" stroke="#5a8ae0"/><path d="M11 9L19 9M19 9L22 17M22 17L30 12M8 17L11 9" stroke="#e06060"/><path d="M19 9L24 3M22 17L19 24M19 24L24 30M11 24L19 24" stroke="#6fb57c"/></g>
<g stroke-width="1"><circle cx="3" cy="9" r="2.2" fill="#8ab0f0" stroke="#5a8ae0"/><circle cx="11" cy="9" r="2.2" fill="#f4a0a0" stroke="#e06060"/><circle cx="19" cy="9" r="2.2" fill="#8ab0f0" stroke="#5a8ae0"/><circle cx="24" cy="3" r="2.2" fill="#b0e0b8" stroke="#6fb57c"/><circle cx="8" cy="17" r="2.2" fill="#f4a0a0" stroke="#e06060"/><circle cx="22" cy="17" r="2.2" fill="#f4a0a0" stroke="#e06060"/><circle cx="30" cy="12" r="2.2" fill="#f4a0a0" stroke="#e06060"/><circle cx="11" cy="24" r="2.2" fill="#8ab0f0" stroke="#5a8ae0"/><circle cx="19" cy="24" r="2.2" fill="#b0e0b8" stroke="#6fb57c"/><circle cx="6" cy="30" r="2.2" fill="#8ab0f0" stroke="#5a8ae0"/><circle cx="24" cy="30" r="2.2" fill="#b0e0b8" stroke="#6fb57c"/></g></svg>
<svg class="a" style="left:791px;top:55px" width="32" height="32" viewBox="0 0 32 32"><polygon points="31,16 28.8,19.4 29,23.5 25.3,25.3 23.5,29 19.4,28.8 16,31 12.6,28.8 8.5,29 6.7,25.3 3,23.5 3.2,19.4 1,16 3.2,12.6 3,8.5 6.7,6.7 8.5,3 12.6,3.2 16,1 19.4,3.2 23.5,3 25.3,6.7 29,8.5 28.8,12.6" fill="#b4dcb8" stroke="#7cbf88" stroke-width="1" stroke-linejoin="round"/><path d="M9 16.5L14 21L23.5 11.5" fill="none" stroke="#fff" stroke-width="2.6"/></svg>
<svg class="a" style="left:843px;top:55px" width="32" height="32" viewBox="0 0 32 32"><path d="M8 2C8 1 24 1 24 2L29 28H3Z" fill="#f5a3a5"/><path d="M8 2C8 1 16 1 16 1.3L15 28H3Z" fill="#f38488"/><circle cx="16" cy="16" r="2.8" fill="#f5a3a5" stroke="#e0575c" stroke-width="1"/><path d="M9 6L7 22" stroke="#f9c5c6" stroke-width="1"/><rect x="1.5" y="27.5" width="29" height="3.5" fill="#b4c4d8" stroke="#93a7c0" stroke-width="0.8"/></svg>
<svg class="a" style="left:905px;top:55px" width="32" height="32" viewBox="0 0 32 32"><path d="M2.5 21.5L17 13" stroke="#c98a5a" stroke-width="3.4" stroke-linecap="round"/><g transform="rotate(-28 20 11)"><rect x="14" y="4" width="12" height="14" rx="1" fill="#ffc89a" stroke="#c98a5a" stroke-width="1"/><rect x="12.5" y="2.5" width="15" height="3" fill="#c98a5a"/><rect x="12.5" y="16.5" width="15" height="3" fill="#c98a5a"/></g><rect x="15.5" y="26.5" width="14" height="3" rx="1.5" fill="#ffc89a" stroke="#c98a5a"/></svg>
<svg class="a" style="left:969px;top:54px" width="34" height="34" viewBox="0 0 34 34"><path d="M17 2L32 10.5H2Z" fill="#dfe8f2" stroke="#a4b6cc" stroke-width="1"/><g fill="#9aaccc" stroke="#8095b8" stroke-width="0.6"><rect x="5" y="12" width="4" height="15"/><rect x="12" y="12" width="4" height="15"/><rect x="19" y="12" width="4" height="15"/><rect x="26" y="12" width="4" height="15"/></g><rect x="3" y="10.5" width="28" height="2" fill="#b7c6da"/><rect x="3" y="26.5" width="28" height="2" fill="#b7c6da"/><rect x="1.5" y="28.5" width="31" height="3" fill="#dfe8f2" stroke="#a4b6cc" stroke-width="0.8"/></svg>
<svg class="a" style="left:1040px;top:58px" width="34" height="26" viewBox="0 0 34 26"><path d="M7.5 23.5C3 23.5 1 20.5 1.2 17.5C1.4 14.5 4 12.5 6.5 12.7C6.5 8 10 3.5 15 3C19.5 2.6 23 5.5 24 9C29 8.5 33 12 33 16.5C33 20.5 30 23.5 26 23.5Z" fill="#c6e2fb" stroke="#7f9cd0" stroke-width="1"/></svg>
<svg class="a" style="left:1137px;top:55px" width="32" height="32" viewBox="0 0 32 32"><circle cx="16" cy="16" r="14.5" fill="#8ab0f0" stroke="#5f88d0" stroke-width="1"/><text x="16" y="23" font-size="20" font-family="Liberation Sans" fill="#fff" text-anchor="middle">?</text></svg>
<div class="dlg" style="left:59px;top:162px;width:711px;height:548px;box-shadow:0 0 0 1px rgba(0,0,0,0.12),0 5px 14px 1px rgba(0,0,0,0.32)">
<div class="a" style="left:0;top:0;width:711px;height:31px;background:#fff"></div>
<div class="t" style="left:8px;top:10px;font-size:11.9px;color:#999">Учители</div>
<div class="a" style="left:592px;top:15px;width:10px;height:1px;background:#777"></div>
<div class="a" style="left:637px;top:10px;width:10px;height:10px;border:1px solid #777"></div>
<svg class="a" style="left:683px;top:10px" width="10" height="10" viewBox="0 0 12 12"><path d="M0.5 0.5L11.5 11.5M11.5 0.5L0.5 11.5" stroke="#777" stroke-width="1"/></svg>
<div class="t" style="left:106px;top:45px;font-size:11px">Въведи учители :</div>
<svg class="a" style="left:32px;top:71px" width="38" height="44" viewBox="0 0 38 43" preserveAspectRatio="none"><rect x="0.5" y="0.5" width="37" height="42" rx="1.5" fill="#8ab4f0" stroke="#5b84c8" stroke-width="0.9"/><path d="M0.5 2C0.5 1 1 0.5 2 0.5H6V42.5H2C1 42.5 0.5 42 0.5 41Z" fill="#4f7cc0"/><rect x="11.5" y="9.5" width="18.5" height="12" fill="#fff"/><path d="M14 13.5H27.5M14 17H27.5" stroke="#b8cbe8" stroke-width="1.2"/></svg>
<svg class="a" style="left:27px;top:135px" width="48" height="49" viewBox="0 0 48 48" preserveAspectRatio="none">
<path d="M0.7 36.5A11.5 10.5 0 0 1 23.5 36.5Z" fill="#f5a3a5" stroke="#c01818" stroke-width="1"/>
<path d="M5 24C3 22 6 14 6 10C6 3 11 0 15.5 0.5C20 0 25 3 26 9L24 24L14 27Z" fill="#a56b42"/>
<path d="M9.5 12C9.5 7 12 5 16 5C20 5 22.5 7 22.5 12C22.5 19 20 22 19 24V27H13V24C11 22 9.5 19 9.5 12Z" fill="#eec070"/>
<path d="M10.2 47.3A19 13.5 0 0 1 48 47.3Z" fill="#b9e0bb" stroke="#0f8a1a" stroke-width="1"/>
<path d="M24.5 30H34V36C34 39 24.5 39 24.5 36Z" fill="#f5cc80" stroke="#c89848" stroke-width="0.6"/>
<path d="M20.5 19C20.5 12 24 10.5 29 10.5C34 10.5 38 12 38 19C38 27 34 32.5 29.2 32.5C24.5 32.5 20.5 27 20.5 19Z" fill="#ffd98c" stroke="#c89848" stroke-width="0.7"/>
<path d="M19 22C17 13 19 4.5 28 4C34 3 41 7 40 15C40 18 39.5 20 38.5 22C38 17 36.5 14 34 11.5C31 14 24 13 21.5 16C20.5 18 20 20 19 22Z" fill="#f0c878" stroke="#c89848" stroke-width="0.5"/>
</svg>
<svg class="a" style="left:34px;top:202px" width="35" height="49" viewBox="0 0 34 48" preserveAspectRatio="none"><rect x="0.4" y="2.6" width="33.2" height="43" fill="#ffc8a0" stroke="#c48a66" stroke-width="0.8"/><rect x="17" y="5" width="6" height="40.5" fill="#50424a"/><rect x="23" y="5" width="8.2" height="40.5" fill="#74606a"/><path d="M2.4 3.6L16.9 0.3V47.7L2.4 44.9Z" fill="#ffc8a0" stroke="#b87a56" stroke-width="0.8" stroke-linejoin="round"/><path d="M15.9 0.8V47.3" stroke="#ffd9bd" stroke-width="1"/><circle cx="12.7" cy="24" r="0.9" fill="#b87a56"/></svg>
<svg class="a" style="left:28px;top:272px" width="46" height="42" viewBox="0 0 48 42" preserveAspectRatio="none"><path d="M11.5 20V34.5C11.5 41.5 36.5 41.5 36.5 34.5V20Z" fill="#383b42"/><path d="M24 1L47 16L24 31.5L1 16Z" fill="#585b61" stroke="#1f262c" stroke-width="1.3" stroke-linejoin="round"/><path d="M24 16L5.5 19.5V33" fill="none" stroke="#f0a020" stroke-width="1.5" stroke-linecap="round"/><path d="M5.5 32L3 36.5L5.5 40.5L8 36.5Z" fill="#ffd080" stroke="#f0a020" stroke-width="0.8"/></svg>
<svg class="a" style="left:25px;top:272px" width="52" height="42" viewBox="0 0 52 42"><path d="M3 13.5H30V4L48.5 21L30 38V28.5H3Z" fill="#80ff80" stroke="#0a7a0a" stroke-width="2" stroke-linejoin="miter"/><rect x="6" y="21.5" width="25" height="3" fill="#f4fff0"/></svg>
<div class="a" style="left:94px;top:60px;width:449px;height:260px;background:#fff;border:1px solid #828790"></div>
<div class="a" style="left:95px;top:61px;width:430px;height:24px;background:#fff;border-bottom:1px solid #e5e5e5"></div>
<div class="a" style="left:255px;top:61px;width:1px;height:24px;background:#e0e0e0"></div>
<div class="a" style="left:305px;top:61px;width:1px;height:24px;background:#e0e0e0"></div>
<div class="a" style="left:355px;top:61px;width:1px;height:24px;background:#e0e0e0"></div>
<div class="a" style="left:415px;top:61px;width:1px;height:24px;background:#e0e0e0"></div>
<div class="a" style="left:516px;top:61px;width:1px;height:24px;background:#e0e0e0"></div>
<div class="t" style="left:101px;top:69px;">Име</div>
<div class="t" style="left:262px;top:69px;">Кратко</div>
<div class="t" style="left:362px;top:69px;">Условия</div>
<div class="t" style="left:422px;top:69px;">Класен ръково...</div>
<div class="t" style="left:522px;top:69px;width:3px;overflow:hidden;">С</div>
<div class="t" style="left:306px;top:69px;width:44px;text-align:right">Брой</div>
<div class="a" style="left:100px;top:86px;width:424px;height:21px;background:#0078d7"></div>
<svg class="a" style="left:99px;top:88px" width="17" height="16" viewBox="0 0 17 16"><path d="M4.5 8V12C4.5 14 12.5 14 12.5 12V8Z" fill="#383b42"/><path d="M8.5 1.5L16.5 6L8.5 10.5L0.5 6Z" fill="#55585e" stroke="#2a3036" stroke-width="0.5"/><path d="M8.5 6L2.5 7.5V13" fill="none" stroke="#f0a830" stroke-width="1.1"/></svg>
<div class="a" style="left:117px;top:88px;width:17px;height:17px;background:#ff0000;border:1px solid #fff"></div>
<div class="t" style="left:135px;top:92px;color:#fff">Тестов Красимиров</div>
<div class="t" style="left:261px;top:92px;color:#fff">Т....</div>
<div class="t" style="left:306px;top:92px;width:44px;text-align:right;color:#fff">23</div>
<div class="a" style="left:356px;top:86px;width:57px;height:19px;background:#000"></div>
<div class="a" style="left:357px;top:87px;width:55px;height:2px;background:#fff"></div>
<div class="a" style="left:357px;top:90px;width:55px;height:14px;background:repeating-linear-gradient(to right,#00ff00 0,#00ff00 7px,#000 7px,#000 8px),#000;-webkit-mask:none"></div>
<div class="a" style="left:357px;top:92px;width:55px;height:1px;background:#000"></div>
<div class="a" style="left:357px;top:95px;width:55px;height:1px;background:#000"></div>
<div class="a" style="left:357px;top:98px;width:55px;height:1px;background:#000"></div>
<div class="a" style="left:357px;top:101px;width:55px;height:1px;background:#000"></div>
<div class="a" style="left:100px;top:107px;width:424px;height:21px;background:#fff"></div>
<svg class="a" style="left:99px;top:109px" width="17" height="16" viewBox="0 0 17 16"><path d="M4.5 8V12C4.5 14 12.5 14 12.5 12V8Z" fill="#383b42"/><path d="M8.5 1.5L16.5 6L8.5 10.5L0.5 6Z" fill="#55585e" stroke="#2a3036" stroke-width="0.5"/><path d="M8.5 6L2.5 7.5V13" fill="none" stroke="#f0a830" stroke-width="1.1"/></svg>
<div class="a" style="left:118px;top:110px;width:15px;height:15px;background:#00ff00"></div>
<div class="t" style="left:135px;top:113px;color:#000">Тестов Димитрова</div>
<div class="t" style="left:261px;top:113px;color:#000">Т....</div>
<div class="t" style="left:306px;top:113px;width:44px;text-align:right;color:#000">26</div>
<div class="a" style="left:356px;top:107px;width:57px;height:19px;background:#000"></div>
<div class="a" style="left:357px;top:108px;width:55px;height:2px;background:#fff"></div>
<div class="a" style="left:357px;top:111px;width:55px;height:14px;background:repeating-linear-gradient(to right,#00ff00 0,#00ff00 7px,#000 7px,#000 8px),#000;-webkit-mask:none"></div>
<div class="a" style="left:357px;top:113px;width:55px;height:1px;background:#000"></div>
<div class="a" style="left:357px;top:116px;width:55px;height:1px;background:#000"></div>
<div class="a" style="left:357px;top:119px;width:55px;height:1px;background:#000"></div>
<div class="a" style="left:357px;top:122px;width:55px;height:1px;background:#000"></div>
<div class="a" style="left:100px;top:128px;width:424px;height:21px;background:#f7f7f7"></div>
<svg class="a" style="left:99px;top:130px" width="17" height="16" viewBox="0 0 17 16"><path d="M4.5 8V12C4.5 14 12.5 14 12.5 12V8Z" fill="#383b42"/><path d="M8.5 1.5L16.5 6L8.5 10.5L0.5 6Z" fill="#55585e" stroke="#2a3036" stroke-width="0.5"/><path d="M8.5 6L2.5 7.5V13" fill="none" stroke="#f0a830" stroke-width="1.1"/></svg>
<div class="a" style="left:118px;top:131px;width:15px;height:15px;background:#0000ff"></div>
<div class="t" style="left:135px;top:134px;color:#000">Тестов Божкова</div>
<div class="t" style="left:261px;top:134px;color:#000">Т....</div>
<div class="t" style="left:306px;top:134px;width:44px;text-align:right;color:#000">20</div>
<div class="a" style="left:356px;top:128px;width:57px;height:19px;background:#000"></div>
<div class="a" style="left:357px;top:129px;width:55px;height:2px;background:#fff"></div>
<div class="a" style="left:357px;top:132px;width:55px;height:14px;background:repeating-linear-gradient(to right,#00ff00 0,#00ff00 7px,#000 7px,#000 8px),#000;-webkit-mask:none"></div>
<div class="a" style="left:357px;top:134px;width:55px;height:1px;background:#000"></div>
<div class="a" style="left:357px;top:137px;width:55px;height:1px;background:#000"></div>
<div class="a" style="left:357px;top:140px;width:55px;height:1px;background:#000"></div>
<div class="a" style="left:357px;top:143px;width:55px;height:1px;background:#000"></div>
<div class="a" style="left:100px;top:149px;width:424px;height:21px;background:#fff"></div>
<svg class="a" style="left:99px;top:151px" width="17" height="16" viewBox="0 0 17 16"><path d="M4.5 8V12C4.5 14 12.5 14 12.5 12V8Z" fill="#383b42"/><path d="M8.5 1.5L16.5 6L8.5 10.5L0.5 6Z" fill="#55585e" stroke="#2a3036" stroke-width="0.5"/><path d="M8.5 6L2.5 7.5V13" fill="none" stroke="#f0a830" stroke-width="1.1"/></svg>
<div class="a" style="left:118px;top:152px;width:15px;height:15px;background:#ffccff"></div>
<div class="t" style="left:135px;top:155px;color:#000">Тестов Димитрова</div>
<div class="t" style="left:261px;top:155px;color:#000">Т....</div>
<div class="t" style="left:306px;top:155px;width:44px;text-align:right;color:#000">20</div>
<div class="a" style="left:356px;top:149px;width:57px;height:19px;background:#000"></div>
<div class="a" style="left:357px;top:150px;width:55px;height:2px;background:#fff"></div>
<div class="a" style="left:357px;top:153px;width:55px;height:14px;background:repeating-linear-gradient(to right,#00ff00 0,#00ff00 7px,#000 7px,#000 8px),#000;-webkit-mask:none"></div>
<div class="a" style="left:357px;top:155px;width:55px;height:1px;background:#000"></div>
<div class="a" style="left:357px;top:158px;width:55px;height:1px;background:#000"></div>
<div class="a" style="left:357px;top:161px;width:55px;height:1px;background:#000"></div>
<div class="a" style="left:357px;top:164px;width:55px;height:1px;background:#000"></div>
<div class="a" style="left:100px;top:170px;width:424px;height:21px;background:#f7f7f7"></div>
<svg class="a" style="left:99px;top:172px" width="17" height="16" viewBox="0 0 17 16"><path d="M4.5 8V12C4.5 14 12.5 14 12.5 12V8Z" fill="#383b42"/><path d="M8.5 1.5L16.5 6L8.5 10.5L0.5 6Z" fill="#55585e" stroke="#2a3036" stroke-width="0.5"/><path d="M8.5 6L2.5 7.5V13" fill="none" stroke="#f0a830" stroke-width="1.1"/></svg>
<div class="a" style="left:118px;top:173px;width:15px;height:15px;background:#ffff66"></div>
<div class="t" style="left:135px;top:176px;color:#000">Тестов Радкова</div>
<div class="t" style="left:261px;top:176px;color:#000">Т....</div>
<div class="t" style="left:306px;top:176px;width:44px;text-align:right;color:#000">19</div>
<div class="a" style="left:356px;top:170px;width:57px;height:19px;background:#000"></div>
<div class="a" style="left:357px;top:171px;width:55px;height:2px;background:#fff"></div>
<div class="a" style="left:357px;top:174px;width:55px;height:14px;background:repeating-linear-gradient(to right,#00ff00 0,#00ff00 7px,#000 7px,#000 8px),#000;-webkit-mask:none"></div>
<div class="a" style="left:357px;top:176px;width:55px;height:1px;background:#000"></div>
<div class="a" style="left:357px;top:179px;width:55px;height:1px;background:#000"></div>
<div class="a" style="left:357px;top:182px;width:55px;height:1px;background:#000"></div>
<div class="a" style="left:357px;top:185px;width:55px;height:1px;background:#000"></div>
<div class="a" style="left:100px;top:191px;width:424px;height:21px;background:#fff"></div>
<svg class="a" style="left:99px;top:193px" width="17" height="16" viewBox="0 0 17 16"><path d="M4.5 8V12C4.5 14 12.5 14 12.5 12V8Z" fill="#383b42"/><path d="M8.5 1.5L16.5 6L8.5 10.5L0.5 6Z" fill="#55585e" stroke="#2a3036" stroke-width="0.5"/><path d="M8.5 6L2.5 7.5V13" fill="none" stroke="#f0a830" stroke-width="1.1"/></svg>
<div class="a" style="left:118px;top:194px;width:15px;height:15px;background:#ff6666"></div>
<div class="t" style="left:135px;top:197px;color:#000">Тестов Узунов</div>
<div class="t" style="left:261px;top:197px;color:#000">Т....</div>
<div class="t" style="left:306px;top:197px;width:44px;text-align:right;color:#000">20</div>
<div class="a" style="left:356px;top:191px;width:57px;height:19px;background:#000"></div>
<div class="a" style="left:357px;top:192px;width:55px;height:2px;background:#fff"></div>
<div class="a" style="left:357px;top:195px;width:55px;height:14px;background:repeating-linear-gradient(to right,#00ff00 0,#00ff00 7px,#000 7px,#000 8px),#000;-webkit-mask:none"></div>
<div class="a" style="left:357px;top:197px;width:55px;height:1px;background:#000"></div>
<div class="a" style="left:357px;top:200px;width:55px;height:1px;background:#000"></div>
<div class="a" style="left:357px;top:203px;width:55px;height:1px;background:#000"></div>
<div class="a" style="left:357px;top:206px;width:55px;height:1px;background:#000"></div>
<div class="a" style="left:100px;top:212px;width:424px;height:21px;background:#f7f7f7"></div>
<svg class="a" style="left:99px;top:214px" width="17" height="16" viewBox="0 0 17 16"><path d="M4.5 8V12C4.5 14 12.5 14 12.5 12V8Z" fill="#383b42"/><path d="M8.5 1.5L16.5 6L8.5 10.5L0.5 6Z" fill="#55585e" stroke="#2a3036" stroke-width="0.5"/><path d="M8.5 6L2.5 7.5V13" fill="none" stroke="#f0a830" stroke-width="1.1"/></svg>
<div class="a" style="left:118px;top:215px;width:15px;height:15px;background:#ffcc66"></div>
<div class="t" style="left:135px;top:218px;color:#000">Тестов Георгиева</div>
<div class="t" style="left:261px;top:218px;color:#000">Т....</div>
<div class="t" style="left:306px;top:218px;width:44px;text-align:right;color:#000">23</div>
<div class="a" style="left:356px;top:212px;width:57px;height:19px;background:#000"></div>
<div class="a" style="left:357px;top:213px;width:55px;height:2px;background:#fff"></div>
<div class="a" style="left:357px;top:216px;width:55px;height:14px;background:repeating-linear-gradient(to right,#00ff00 0,#00ff00 7px,#000 7px,#000 8px),#000;-webkit-mask:none"></div>
<div class="a" style="left:357px;top:218px;width:55px;height:1px;background:#000"></div>
<div class="a" style="left:357px;top:221px;width:55px;height:1px;background:#000"></div>
<div class="a" style="left:357px;top:224px;width:55px;height:1px;background:#000"></div>
<div class="a" style="left:357px;top:227px;width:55px;height:1px;background:#000"></div>
<div class="a" style="left:100px;top:233px;width:424px;height:21px;background:#fff"></div>
<svg class="a" style="left:99px;top:235px" width="17" height="16" viewBox="0 0 17 16"><path d="M4.5 8V12C4.5 14 12.5 14 12.5 12V8Z" fill="#383b42"/><path d="M8.5 1.5L16.5 6L8.5 10.5L0.5 6Z" fill="#55585e" stroke="#2a3036" stroke-width="0.5"/><path d="M8.5 6L2.5 7.5V13" fill="none" stroke="#f0a830" stroke-width="1.1"/></svg>
<div class="a" style="left:118px;top:236px;width:15px;height:15px;background:#000080"></div>
<div class="t" style="left:135px;top:239px;color:#000">Тестов Радева</div>
<div class="t" style="left:261px;top:239px;color:#000">Т....</div>
<div class="t" style="left:306px;top:239px;width:44px;text-align:right;color:#000">19</div>
<div class="a" style="left:356px;top:233px;width:57px;height:19px;background:#000"></div>
<div class="a" style="left:357px;top:234px;width:55px;height:2px;background:#fff"></div>
<div class="a" style="left:357px;top:237px;width:55px;height:14px;background:repeating-linear-gradient(to right,#00ff00 0,#00ff00 7px,#000 7px,#000 8px),#000;-webkit-mask:none"></div>
<div class="a" style="left:357px;top:239px;width:55px;height:1px;background:#000"></div>
<div class="a" style="left:357px;top:242px;width:55px;height:1px;background:#000"></div>
<div class="a" style="left:357px;top:245px;width:55px;height:1px;background:#000"></div>
<div class="a" style="left:357px;top:248px;width:55px;height:1px;background:#000"></div>
<div class="a" style="left:100px;top:254px;width:424px;height:21px;background:#f7f7f7"></div>
<svg class="a" style="left:99px;top:256px" width="17" height="16" viewBox="0 0 17 16"><path d="M4.5 8V12C4.5 14 12.5 14 12.5 12V8Z" fill="#383b42"/><path d="M8.5 1.5L16.5 6L8.5 10.5L0.5 6Z" fill="#55585e" stroke="#2a3036" stroke-width="0.5"/><path d="M8.5 6L2.5 7.5V13" fill="none" stroke="#f0a830" stroke-width="1.1"/></svg>
<div class="a" style="left:118px;top:257px;width:15px;height:15px;background:#66ffff"></div>
<div class="t" style="left:135px;top:260px;color:#000">Тестов Илчева</div>
<div class="t" style="left:261px;top:260px;color:#000">Т....</div>
<div class="t" style="left:306px;top:260px;width:44px;text-align:right;color:#000">20</div>
<div class="a" style="left:356px;top:254px;width:57px;height:19px;background:#000"></div>
<div class="a" style="left:357px;top:255px;width:55px;height:2px;background:#fff"></div>
<div class="a" style="left:357px;top:258px;width:55px;height:14px;background:repeating-linear-gradient(to right,#00ff00 0,#00ff00 7px,#000 7px,#000 8px),#000;-webkit-mask:none"></div>
<div class="a" style="left:357px;top:260px;width:55px;height:1px;background:#000"></div>
<div class="a" style="left:357px;top:263px;width:55px;height:1px;background:#000"></div>
<div class="a" style="left:357px;top:266px;width:55px;height:1px;background:#000"></div>
<div class="a" style="left:357px;top:269px;width:55px;height:1px;background:#000"></div>
<div class="a" style="left:100px;top:275px;width:424px;height:21px;background:#fff"></div>
<svg class="a" style="left:99px;top:277px" width="17" height="16" viewBox="0 0 17 16"><path d="M4.5 8V12C4.5 14 12.5 14 12.5 12V8Z" fill="#383b42"/><path d="M8.5 1.5L16.5 6L8.5 10.5L0.5 6Z" fill="#55585e" stroke="#2a3036" stroke-width="0.5"/><path d="M8.5 6L2.5 7.5V13" fill="none" stroke="#f0a830" stroke-width="1.1"/></svg>
<div class="a" style="left:118px;top:278px;width:15px;height:15px;background:#009933"></div>
<div class="t" style="left:135px;top:281px;color:#000">Тестов Минкова</div>
<div class="t" style="left:261px;top:281px;color:#000">Т....</div>
<div class="t" style="left:306px;top:281px;width:44px;text-align:right;color:#000">20</div>
<div class="a" style="left:356px;top:275px;width:57px;height:19px;background:#000"></div>
<div class="a" style="left:357px;top:276px;width:55px;height:2px;background:#fff"></div>
<div class="a" style="left:357px;top:279px;width:55px;height:14px;background:repeating-linear-gradient(to right,#00ff00 0,#00ff00 7px,#000 7px,#000 8px),#000;-webkit-mask:none"></div>
<div class="a" style="left:357px;top:281px;width:55px;height:1px;background:#000"></div>
<div class="a" style="left:357px;top:284px;width:55px;height:1px;background:#000"></div>
<div class="a" style="left:357px;top:287px;width:55px;height:1px;background:#000"></div>
<div class="a" style="left:357px;top:290px;width:55px;height:1px;background:#000"></div>
<div class="a" style="left:100px;top:296px;width:424px;height:21px;background:#f7f7f7"></div>
<svg class="a" style="left:99px;top:298px" width="17" height="16" viewBox="0 0 17 16"><path d="M4.5 8V12C4.5 14 12.5 14 12.5 12V8Z" fill="#383b42"/><path d="M8.5 1.5L16.5 6L8.5 10.5L0.5 6Z" fill="#55585e" stroke="#2a3036" stroke-width="0.5"/><path d="M8.5 6L2.5 7.5V13" fill="none" stroke="#f0a830" stroke-width="1.1"/></svg>
<div class="a" style="left:118px;top:299px;width:15px;height:15px;background:#ccff99"></div>
<div class="t" style="left:135px;top:302px;color:#000">Тестов Лалева</div>
<div class="t" style="left:261px;top:302px;color:#000">Т....</div>
<div class="t" style="left:306px;top:302px;width:44px;text-align:right;color:#000">21</div>
<div class="a" style="left:356px;top:296px;width:57px;height:19px;background:#000"></div>
<div class="a" style="left:357px;top:297px;width:55px;height:2px;background:#fff"></div>
<div class="a" style="left:357px;top:300px;width:55px;height:14px;background:repeating-linear-gradient(to right,#00ff00 0,#00ff00 7px,#000 7px,#000 8px),#000;-webkit-mask:none"></div>
<div class="a" style="left:357px;top:302px;width:55px;height:1px;background:#000"></div>
<div class="a" style="left:357px;top:305px;width:55px;height:1px;background:#000"></div>
<div class="a" style="left:357px;top:308px;width:55px;height:1px;background:#000"></div>
<div class="a" style="left:357px;top:311px;width:55px;height:1px;background:#000"></div>
<div class="a" style="left:524px;top:61px;width:18px;height:258px;background:#f0f0f0"></div>
<div class="a" style="left:525px;top:79px;width:15px;height:148px;background:#cdcdcd"></div>
<svg class="a" style="left:527px;top:67px" width="11" height="7" viewBox="0 0 11 7"><path d="M1 6L5.5 1.5L10 6" fill="none" stroke="#404040" stroke-width="1.6"/></svg>
<div class="btn" style="left:558px;top:61px;width:132px;height:27px"></div>
<svg class="a" style="left:567px;top:66px" width="16" height="16" viewBox="0 0 16 16"><circle cx="8" cy="8" r="7.5" fill="#44c044"/><circle cx="8" cy="8" r="6" fill="#3cb83c"/><path d="M8 4V12M4 8H12" stroke="#fff" stroke-width="2.4"/></svg>
<div class="t" style="left:590px;top:70px">Нов</div>
<div class="btn" style="left:558px;top:97px;width:132px;height:27px"></div>
<svg class="a" style="left:566px;top:102px" width="17" height="16" viewBox="0 0 17 16"><path d="M4.5 8V12C4.5 14 12.5 14 12.5 12V8Z" fill="#383b42"/><path d="M8.5 1.5L16.5 6L8.5 10.5L0.5 6Z" fill="#55585e" stroke="#2a3036" stroke-width="0.5"/><path d="M8.5 6L2.5 7.5V13" fill="none" stroke="#f0a830" stroke-width="1.1"/></svg>
<div class="t" style="left:590px;top:106px">Редактирай</div>
<div class="btn" style="left:558px;top:132px;width:132px;height:27px"></div>
<svg class="a" style="left:567px;top:137px" width="16" height="16" viewBox="0 0 16 16"><circle cx="8" cy="8" r="7.5" fill="#f04848"/><rect x="3.5" y="6.5" width="9" height="3" fill="#fff"/></svg>
<div class="t" style="left:590px;top:141px">Премахни</div>
<div class="btn" style="left:558px;top:199px;width:132px;height:27px"></div>
<svg class="a" style="left:567px;top:204px" width="16" height="16" viewBox="0 0 16 16"><rect x="3" y="4" width="12" height="11" rx="1" fill="#2a80f0"/><rect x="1" y="1" width="11" height="11.5" fill="#f0106c"/></svg>
<div class="t" style="left:590px;top:208px">Часове</div>
<div class="btn" style="left:558px;top:235px;width:132px;height:27px"></div>
<svg class="a" style="left:566px;top:240px" width="17" height="17" viewBox="0 0 17 17"><circle cx="8.5" cy="8.5" r="7.5" fill="#f4f8ff" stroke="#5078b8" stroke-width="1.2"/><path d="M8.5 4V9L11 11.5" fill="none" stroke="#5078b8" stroke-width="1.1"/></svg>
<div class="t" style="left:590px;top:244px">Условия</div>
<div class="btn" style="left:558px;top:271px;width:132px;height:27px"></div>
<svg class="a" style="left:566px;top:276px" width="17" height="17" viewBox="0 0 17 17"><path d="M5.5 1V16M11.5 1V16M1 5.5H16M1 11.5H16" stroke="#8a6aa8" stroke-width="2.6"/></svg>
<div class="t" style="left:590px;top:280px">Ограничения</div>
<div class="a" style="left:11px;top:501px;width:690px;height:1px;background:#a0a0a0"></div>
<div class="a" style="left:11px;top:502px;width:690px;height:1px;background:#fff"></div>
<div class="btn" style="left:11px;top:516px;width:120px;height:21px"></div>
<svg class="a" style="left:14px;top:518px" width="16" height="16" viewBox="0 0 16 16"><circle cx="8" cy="8" r="7.3" fill="#8ab0f0" stroke="#5f88d0"/><text x="8" y="12" font-size="11" font-family="Liberation Sans" fill="#fff" text-anchor="middle">?</text></svg>
<div class="t" style="left:43px;top:521px">Помощ</div>
</div>
<div class="dlg" style="left:136px;top:479px;width:881px;height:544px;box-shadow:0 0 0 1px rgba(0,0,0,0.16),0 5px 14px 1px rgba(0,0,0,0.34)">
<div class="a" style="left:0;top:0;width:881px;height:30px;background:#fff"></div>
<svg class="a" style="left:8px;top:7px" width="16" height="14" viewBox="0 0 16 14"><rect x="0.5" y="0.5" width="15" height="13" fill="#e8ecf0" stroke="#98a0a8"/><rect x="2" y="3" width="5" height="8" fill="#2a8a60"/><rect x="8" y="3" width="3" height="8" fill="#a8c8e8"/><rect x="12" y="3" width="2" height="8" fill="#c8d8e8"/></svg>
<div class="t" style="left:29px;top:9px;font-size:12.1px;color:#999">Норматив</div>
<svg class="a" style="left:11px;top:36px" width="43" height="39" viewBox="0 0 48 42" preserveAspectRatio="none"><path d="M11.5 20V34.5C11.5 41.5 36.5 41.5 36.5 34.5V20Z" fill="#383b42"/><path d="M24 1L47 16L24 31.5L1 16Z" fill="#585b61" stroke="#1f262c" stroke-width="1.3" stroke-linejoin="round"/><path d="M24 16L5.5 19.5V33" fill="none" stroke="#f0a020" stroke-width="1.5" stroke-linecap="round"/><path d="M5.5 32L3 36.5L5.5 40.5L8 36.5Z" fill="#ffd080" stroke="#f0a020" stroke-width="0.8"/></svg>
<div class="t" style="left:63px;top:39px;font-size:14.6px;font-weight:bold">Тестов Красимиров</div>
<div class="t" style="left:62px;top:65px">Т.Красимиров</div>
<div class="a" style="left:6px;top:79px;width:870px;height:411px;background:#fff;border:1px solid #828790"></div>
<div class="a" style="left:7px;top:80px;width:852px;height:25px;background:#f1f1f1;border-bottom:1px solid #a8a8a8"></div>
<div class="a" style="left:157px;top:81px;width:1px;height:23px;background:#b8b8b8"></div>
<div class="a" style="left:317px;top:81px;width:1px;height:23px;background:#b8b8b8"></div>
<div class="a" style="left:448px;top:81px;width:1px;height:23px;background:#b8b8b8"></div>
<div class="a" style="left:496px;top:81px;width:1px;height:23px;background:#b8b8b8"></div>
<div class="a" style="left:557px;top:81px;width:1px;height:23px;background:#b8b8b8"></div>
<div class="t" style="left:13px;top:88px">Предмет</div>
<div class="t" style="left:164px;top:88px">Учител</div>
<div class="t" style="left:323px;top:88px">Клас</div>
<div class="t" style="left:453px;top:88px">Брой</div>
<div class="t" style="left:504px;top:88px">Дължина</div>
<div class="t" style="left:564px;top:88px">Класни стаи</div>
<svg class="a" style="left:141px;top:85px" width="10" height="15" viewBox="0 0 10 15"><path d="M1 14L5.5 1" stroke="#a0a0a0" stroke-width="1" fill="none"/><path d="M5.5 1L9 14H1" stroke="#fff" stroke-width="1" fill="none"/></svg>
<div class="a" style="left:12px;top:105px;width:736px;height:26px;background:#f6f6f6"></div>
<div class="a" style="left:14px;top:107px;width:22px;height:22px;background:linear-gradient(to bottom,#ff8080 0,#ff0000 7px);overflow:hidden;display:flex;justify-content:center"><div style="white-space:pre;line-height:1;margin-top:7px;font-size:11px;color:#2a0000;flex:none">Мз-</div></div>
<div class="t" style="left:63px;top:113px;color:#000">Музика - ООП</div>
<div class="t" style="left:163px;top:113px;color:#000">Тестов Красимиров</div>
<div class="t" style="left:324px;top:113px;color:#000">5 а</div>
<div class="t" style="left:455px;top:113px;color:#000">2</div>
<div class="t" style="left:505px;top:113px;color:#000">1</div>
<svg class="a" style="left:565px;top:109px" width="13" height="13" viewBox="0 0 13 13"><rect x="2.3" y="5.5" width="7.6" height="6.3" fill="#fffce8"/><path d="M3.5 9L4.5 8M8 9.5L8.8 8.5M5.5 6.5L6.5 5.5" stroke="#ffe94a" stroke-width="0.9"/><rect x="7.7" y="0.3" width="1.4" height="2.4" fill="#e81818"/><path d="M1.2 7.5L6.2 2.2L11.6 7.5" fill="none" stroke="#000" stroke-width="1.8"/><path d="M0.9 6.3L6.2 0.9L10.5 5.5" fill="none" stroke="#ffd92a" stroke-width="1.4"/><path d="M2.7 7V11.9H10.3V6.5" fill="none" stroke="#000" stroke-width="1.1"/><rect x="4.9" y="8.3" width="2" height="3.2" fill="#f09a00"/></svg>
<div class="a" style="left:12px;top:131px;width:736px;height:26px;background:#0078d7"></div>
<div class="a" style="left:14px;top:133px;width:22px;height:22px;background:linear-gradient(to bottom,#ff8080 0,#ff0000 7px);overflow:hidden;display:flex;justify-content:center"><div style="white-space:pre;line-height:1;margin-top:7px;font-size:11px;color:#2a0000;flex:none">Мз-</div></div>
<div class="t" style="left:63px;top:139px;color:#fff">Музика - ООП</div>
<div class="t" style="left:163px;top:139px;color:#fff">Тестов Красимиров</div>
<div class="t" style="left:324px;top:139px;color:#fff">7 а</div>
<div class="t" style="left:455px;top:139px;color:#fff">2</div>
<div class="t" style="left:505px;top:139px;color:#fff">1</div>
<svg class="a" style="left:565px;top:135px" width="13" height="13" viewBox="0 0 13 13"><rect x="2.3" y="5.5" width="7.6" height="6.3" fill="#fffce8"/><path d="M3.5 9L4.5 8M8 9.5L8.8 8.5M5.5 6.5L6.5 5.5" stroke="#ffe94a" stroke-width="0.9"/><rect x="7.7" y="0.3" width="1.4" height="2.4" fill="#e81818"/><path d="M1.2 7.5L6.2 2.2L11.6 7.5" fill="none" stroke="#000" stroke-width="1.8"/><path d="M0.9 6.3L6.2 0.9L10.5 5.5" fill="none" stroke="#ffd92a" stroke-width="1.4"/><path d="M2.7 7V11.9H10.3V6.5" fill="none" stroke="#000" stroke-width="1.1"/><rect x="4.9" y="8.3" width="2" height="3.2" fill="#f09a00"/></svg>
<div class="a" style="left:12px;top:157px;width:736px;height:26px;background:#f6f6f6"></div>
<div class="a" style="left:14px;top:159px;width:22px;height:22px;background:linear-gradient(to bottom,#ff8080 0,#ff0000 7px);overflow:hidden;display:flex;justify-content:center"><div style="white-space:pre;line-height:1;margin-top:7px;font-size:11px;color:#2a0000;flex:none">Мз-</div></div>
<div class="t" style="left:63px;top:165px;color:#000">Музика - ООП</div>
<div class="t" style="left:163px;top:165px;color:#000">Тестов Красимиров</div>
<div class="t" style="left:324px;top:165px;color:#000">6 в</div>
<div class="t" style="left:455px;top:165px;color:#000">2</div>
<div class="t" style="left:505px;top:165px;color:#000">1</div>
<svg class="a" style="left:565px;top:161px" width="13" height="13" viewBox="0 0 13 13"><rect x="2.3" y="5.5" width="7.6" height="6.3" fill="#fffce8"/><path d="M3.5 9L4.5 8M8 9.5L8.8 8.5M5.5 6.5L6.5 5.5" stroke="#ffe94a" stroke-width="0.9"/><rect x="7.7" y="0.3" width="1.4" height="2.4" fill="#e81818"/><path d="M1.2 7.5L6.2 2.2L11.6 7.5" fill="none" stroke="#000" stroke-width="1.8"/><path d="M0.9 6.3L6.2 0.9L10.5 5.5" fill="none" stroke="#ffd92a" stroke-width="1.4"/><path d="M2.7 7V11.9H10.3V6.5" fill="none" stroke="#000" stroke-width="1.1"/><rect x="4.9" y="8.3" width="2" height="3.2" fill="#f09a00"/></svg>
<div class="a" style="left:12px;top:183px;width:736px;height:26px;background:#fff"></div>
<div class="a" style="left:14px;top:185px;width:22px;height:22px;background:linear-gradient(to bottom,#ff8080 0,#ff0000 7px);overflow:hidden;display:flex;justify-content:center"><div style="white-space:pre;line-height:1;margin-top:7px;font-size:11px;color:#2a0000;flex:none">Мз-</div></div>
<div class="t" style="left:63px;top:191px;color:#000">Музика - ООП</div>
<div class="t" style="left:163px;top:191px;color:#000">Тестов Красимиров</div>
<div class="t" style="left:324px;top:191px;color:#000">6 б</div>
<div class="t" style="left:455px;top:191px;color:#000">2</div>
<div class="t" style="left:505px;top:191px;color:#000">1</div>
<svg class="a" style="left:565px;top:187px" width="13" height="13" viewBox="0 0 13 13"><rect x="2.3" y="5.5" width="7.6" height="6.3" fill="#fffce8"/><path d="M3.5 9L4.5 8M8 9.5L8.8 8.5M5.5 6.5L6.5 5.5" stroke="#ffe94a" stroke-width="0.9"/><rect x="7.7" y="0.3" width="1.4" height="2.4" fill="#e81818"/><path d="M1.2 7.5L6.2 2.2L11.6 7.5" fill="none" stroke="#000" stroke-width="1.8"/><path d="M0.9 6.3L6.2 0.9L10.5 5.5" fill="none" stroke="#ffd92a" stroke-width="1.4"/><path d="M2.7 7V11.9H10.3V6.5" fill="none" stroke="#000" stroke-width="1.1"/><rect x="4.9" y="8.3" width="2" height="3.2" fill="#f09a00"/></svg>
<div class="a" style="left:12px;top:209px;width:736px;height:26px;background:#f6f6f6"></div>
<div class="a" style="left:14px;top:211px;width:22px;height:22px;background:linear-gradient(to bottom,#ff8080 0,#ff0000 7px);overflow:hidden;display:flex;justify-content:center"><div style="white-space:pre;line-height:1;margin-top:7px;font-size:11px;color:#2a0000;flex:none">Мз-</div></div>
<div class="t" style="left:63px;top:217px;color:#000">Музика - ООП</div>
<div class="t" style="left:163px;top:217px;color:#000">Тестов Красимиров</div>
<div class="t" style="left:324px;top:217px;color:#000">8 а</div>
<div class="t" style="left:455px;top:217px;color:#000">1</div>
<div class="t" style="left:505px;top:217px;color:#000">1</div>
<svg class="a" style="left:565px;top:213px" width="13" height="13" viewBox="0 0 13 13"><rect x="2.3" y="5.5" width="7.6" height="6.3" fill="#fffce8"/><path d="M3.5 9L4.5 8M8 9.5L8.8 8.5M5.5 6.5L6.5 5.5" stroke="#ffe94a" stroke-width="0.9"/><rect x="7.7" y="0.3" width="1.4" height="2.4" fill="#e81818"/><path d="M1.2 7.5L6.2 2.2L11.6 7.5" fill="none" stroke="#000" stroke-width="1.8"/><path d="M0.9 6.3L6.2 0.9L10.5 5.5" fill="none" stroke="#ffd92a" stroke-width="1.4"/><path d="M2.7 7V11.9H10.3V6.5" fill="none" stroke="#000" stroke-width="1.1"/><rect x="4.9" y="8.3" width="2" height="3.2" fill="#f09a00"/></svg>
<div class="a" style="left:12px;top:235px;width:736px;height:26px;background:#fff"></div>
<div class="a" style="left:14px;top:237px;width:22px;height:22px;background:linear-gradient(to bottom,#ff8080 0,#ff0000 7px);overflow:hidden;display:flex;justify-content:center"><div style="white-space:pre;line-height:1;margin-top:7px;font-size:11px;color:#2a0000;flex:none">Мз-</div></div>
<div class="t" style="left:63px;top:243px;color:#000">Музика - ООП</div>
<div class="t" style="left:163px;top:243px;color:#000">Тестов Красимиров</div>
<div class="t" style="left:324px;top:243px;color:#000">8 б</div>
<div class="t" style="left:455px;top:243px;color:#000">1</div>
<div class="t" style="left:505px;top:243px;color:#000">1</div>
<svg class="a" style="left:565px;top:239px" width="13" height="13" viewBox="0 0 13 13"><rect x="2.3" y="5.5" width="7.6" height="6.3" fill="#fffce8"/><path d="M3.5 9L4.5 8M8 9.5L8.8 8.5M5.5 6.5L6.5 5.5" stroke="#ffe94a" stroke-width="0.9"/><rect x="7.7" y="0.3" width="1.4" height="2.4" fill="#e81818"/><path d="M1.2 7.5L6.2 2.2L11.6 7.5" fill="none" stroke="#000" stroke-width="1.8"/><path d="M0.9 6.3L6.2 0.9L10.5 5.5" fill="none" stroke="#ffd92a" stroke-width="1.4"/><path d="M2.7 7V11.9H10.3V6.5" fill="none" stroke="#000" stroke-width="1.1"/><rect x="4.9" y="8.3" width="2" height="3.2" fill="#f09a00"/></svg>
<div class="a" style="left:12px;top:261px;width:736px;height:26px;background:#f6f6f6"></div>
<div class="a" style="left:14px;top:263px;width:22px;height:22px;background:linear-gradient(to bottom,#ff8080 0,#ff0000 7px);overflow:hidden;display:flex;justify-content:center"><div style="white-space:pre;line-height:1;margin-top:7px;font-size:11px;color:#2a0000;flex:none">Мз-</div></div>
<div class="t" style="left:63px;top:269px;color:#000">Музика - ООП</div>
<div class="t" style="left:163px;top:269px;color:#000">Тестов Красимиров</div>
<div class="t" style="left:324px;top:269px;color:#000">9 а</div>
<div class="t" style="left:455px;top:269px;color:#000">1</div>
<div class="t" style="left:505px;top:269px;color:#000">1</div>
<svg class="a" style="left:565px;top:265px" width="13" height="13" viewBox="0 0 13 13"><rect x="2.3" y="5.5" width="7.6" height="6.3" fill="#fffce8"/><path d="M3.5 9L4.5 8M8 9.5L8.8 8.5M5.5 6.5L6.5 5.5" stroke="#ffe94a" stroke-width="0.9"/><rect x="7.7" y="0.3" width="1.4" height="2.4" fill="#e81818"/><path d="M1.2 7.5L6.2 2.2L11.6 7.5" fill="none" stroke="#000" stroke-width="1.8"/><path d="M0.9 6.3L6.2 0.9L10.5 5.5" fill="none" stroke="#ffd92a" stroke-width="1.4"/><path d="M2.7 7V11.9H10.3V6.5" fill="none" stroke="#000" stroke-width="1.1"/><rect x="4.9" y="8.3" width="2" height="3.2" fill="#f09a00"/></svg>
<div class="a" style="left:12px;top:287px;width:736px;height:26px;background:#fff"></div>
<div class="a" style="left:14px;top:289px;width:22px;height:22px;background:linear-gradient(to bottom,#ff8080 0,#ff0000 7px);overflow:hidden;display:flex;justify-content:center"><div style="white-space:pre;line-height:1;margin-top:7px;font-size:11px;color:#2a0000;flex:none">Мз-</div></div>
<div class="t" style="left:63px;top:295px;color:#000">Музика - ООП</div>
<div class="t" style="left:163px;top:295px;color:#000">Тестов Красимиров</div>
<div class="t" style="left:324px;top:295px;color:#000">7 б</div>
<div class="t" style="left:455px;top:295px;color:#000">2</div>
<div class="t" style="left:505px;top:295px;color:#000">1</div>
<svg class="a" style="left:565px;top:291px" width="13" height="13" viewBox="0 0 13 13"><rect x="2.3" y="5.5" width="7.6" height="6.3" fill="#fffce8"/><path d="M3.5 9L4.5 8M8 9.5L8.8 8.5M5.5 6.5L6.5 5.5" stroke="#ffe94a" stroke-width="0.9"/><rect x="7.7" y="0.3" width="1.4" height="2.4" fill="#e81818"/><path d="M1.2 7.5L6.2 2.2L11.6 7.5" fill="none" stroke="#000" stroke-width="1.8"/><path d="M0.9 6.3L6.2 0.9L10.5 5.5" fill="none" stroke="#ffd92a" stroke-width="1.4"/><path d="M2.7 7V11.9H10.3V6.5" fill="none" stroke="#000" stroke-width="1.1"/><rect x="4.9" y="8.3" width="2" height="3.2" fill="#f09a00"/></svg>
<div class="a" style="left:12px;top:313px;width:736px;height:26px;background:#f6f6f6"></div>
<div class="a" style="left:14px;top:315px;width:22px;height:22px;background:linear-gradient(to bottom,#ff8080 0,#ff0000 7px);overflow:hidden;display:flex;justify-content:center"><div style="white-space:pre;line-height:1;margin-top:7px;font-size:11px;color:#2a0000;flex:none">Мз-</div></div>
<div class="t" style="left:63px;top:321px;color:#000">Музика - ООП</div>
<div class="t" style="left:163px;top:321px;color:#000">Тестов Красимиров</div>
<div class="t" style="left:324px;top:321px;color:#000">5 б</div>
<div class="t" style="left:455px;top:321px;color:#000">2</div>
<div class="t" style="left:505px;top:321px;color:#000">1</div>
<svg class="a" style="left:565px;top:317px" width="13" height="13" viewBox="0 0 13 13"><rect x="2.3" y="5.5" width="7.6" height="6.3" fill="#fffce8"/><path d="M3.5 9L4.5 8M8 9.5L8.8 8.5M5.5 6.5L6.5 5.5" stroke="#ffe94a" stroke-width="0.9"/><rect x="7.7" y="0.3" width="1.4" height="2.4" fill="#e81818"/><path d="M1.2 7.5L6.2 2.2L11.6 7.5" fill="none" stroke="#000" stroke-width="1.8"/><path d="M0.9 6.3L6.2 0.9L10.5 5.5" fill="none" stroke="#ffd92a" stroke-width="1.4"/><path d="M2.7 7V11.9H10.3V6.5" fill="none" stroke="#000" stroke-width="1.1"/><rect x="4.9" y="8.3" width="2" height="3.2" fill="#f09a00"/></svg>
<div class="a" style="left:12px;top:339px;width:736px;height:26px;background:#fff"></div>
<div class="a" style="left:14px;top:341px;width:22px;height:22px;background:linear-gradient(to bottom,#ff8080 0,#ff0000 7px);overflow:hidden;display:flex;justify-content:center"><div style="white-space:pre;line-height:1;margin-top:7px;font-size:11px;color:#2a0000;flex:none">Мз-</div></div>
<div class="t" style="left:63px;top:347px;color:#000">Музика - ООП</div>
<div class="t" style="left:163px;top:347px;color:#000">Тестов Красимиров</div>
<div class="t" style="left:324px;top:347px;color:#000">5 в</div>
<div class="t" style="left:455px;top:347px;color:#000">2</div>
<div class="t" style="left:505px;top:347px;color:#000">1</div>
<svg class="a" style="left:565px;top:343px" width="13" height="13" viewBox="0 0 13 13"><rect x="2.3" y="5.5" width="7.6" height="6.3" fill="#fffce8"/><path d="M3.5 9L4.5 8M8 9.5L8.8 8.5M5.5 6.5L6.5 5.5" stroke="#ffe94a" stroke-width="0.9"/><rect x="7.7" y="0.3" width="1.4" height="2.4" fill="#e81818"/><path d="M1.2 7.5L6.2 2.2L11.6 7.5" fill="none" stroke="#000" stroke-width="1.8"/><path d="M0.9 6.3L6.2 0.9L10.5 5.5" fill="none" stroke="#ffd92a" stroke-width="1.4"/><path d="M2.7 7V11.9H10.3V6.5" fill="none" stroke="#000" stroke-width="1.1"/><rect x="4.9" y="8.3" width="2" height="3.2" fill="#f09a00"/></svg>
<div class="a" style="left:12px;top:365px;width:736px;height:26px;background:#f6f6f6"></div>
<div class="a" style="left:14px;top:367px;width:22px;height:22px;background:linear-gradient(to bottom,#ff8080 0,#ff0000 7px);overflow:hidden;display:flex;justify-content:center"><div style="white-space:pre;line-height:1;margin-top:7px;font-size:11px;color:#2a0000;flex:none">Мз-</div></div>
<div class="t" style="left:63px;top:373px;color:#000">Музика - ООП</div>
<div class="t" style="left:163px;top:373px;color:#000">Тестов Красимиров</div>
<div class="t" style="left:324px;top:373px;color:#000">6 а</div>
<div class="t" style="left:455px;top:373px;color:#000">2</div>
<div class="t" style="left:505px;top:373px;color:#000">1</div>
<svg class="a" style="left:565px;top:369px" width="13" height="13" viewBox="0 0 13 13"><rect x="2.3" y="5.5" width="7.6" height="6.3" fill="#fffce8"/><path d="M3.5 9L4.5 8M8 9.5L8.8 8.5M5.5 6.5L6.5 5.5" stroke="#ffe94a" stroke-width="0.9"/><rect x="7.7" y="0.3" width="1.4" height="2.4" fill="#e81818"/><path d="M1.2 7.5L6.2 2.2L11.6 7.5" fill="none" stroke="#000" stroke-width="1.8"/><path d="M0.9 6.3L6.2 0.9L10.5 5.5" fill="none" stroke="#ffd92a" stroke-width="1.4"/><path d="M2.7 7V11.9H10.3V6.5" fill="none" stroke="#000" stroke-width="1.1"/><rect x="4.9" y="8.3" width="2" height="3.2" fill="#f09a00"/></svg>
<div class="a" style="left:12px;top:391px;width:736px;height:26px;background:#fff"></div>
<div class="a" style="left:14px;top:393px;width:22px;height:22px;background:linear-gradient(to bottom,#ff8080 0,#ff0000 7px);overflow:hidden;display:flex;justify-content:center"><div style="white-space:pre;line-height:1;margin-top:7px;font-size:11px;color:#2a0000;flex:none">Хп-Р</div></div>
<div class="t" style="left:63px;top:399px;color:#000">Хорово пеене...</div>
<div class="t" style="left:163px;top:399px;color:#000">Тестов Красимиров</div>
<div class="t" style="left:324px;top:399px;color:#000">2 б</div>
<div class="t" style="left:455px;top:399px;color:#000">1</div>
<div class="t" style="left:505px;top:399px;color:#000">1</div>
<svg class="a" style="left:565px;top:395px" width="13" height="13" viewBox="0 0 13 13"><rect x="2.3" y="5.5" width="7.6" height="6.3" fill="#fffce8"/><path d="M3.5 9L4.5 8M8 9.5L8.8 8.5M5.5 6.5L6.5 5.5" stroke="#ffe94a" stroke-width="0.9"/><rect x="7.7" y="0.3" width="1.4" height="2.4" fill="#e81818"/><path d="M1.2 7.5L6.2 2.2L11.6 7.5" fill="none" stroke="#000" stroke-width="1.8"/><path d="M0.9 6.3L6.2 0.9L10.5 5.5" fill="none" stroke="#ffd92a" stroke-width="1.4"/><path d="M2.7 7V11.9H10.3V6.5" fill="none" stroke="#000" stroke-width="1.1"/><rect x="4.9" y="8.3" width="2" height="3.2" fill="#f09a00"/></svg>
<div class="a" style="left:12px;top:417px;width:736px;height:26px;background:#f6f6f6"></div>
<div class="a" style="left:14px;top:419px;width:22px;height:22px;background:linear-gradient(to bottom,#ff8080 0,#ff0000 7px);overflow:hidden;display:flex;justify-content:center"><div style="white-space:pre;line-height:1;margin-top:7px;font-size:11px;color:#2a0000;flex:none">Хп-Р</div></div>
<div class="t" style="left:63px;top:425px;color:#000">Хорово пеене...</div>
<div class="t" style="left:163px;top:425px;color:#000">Тестов Красимиров</div>
<div class="t" style="left:324px;top:425px;color:#000">2 а</div>
<div class="t" style="left:455px;top:425px;color:#000">1</div>
<div class="t" style="left:505px;top:425px;color:#000">1</div>
<svg class="a" style="left:565px;top:421px" width="13" height="13" viewBox="0 0 13 13"><rect x="2.3" y="5.5" width="7.6" height="6.3" fill="#fffce8"/><path d="M3.5 9L4.5 8M8 9.5L8.8 8.5M5.5 6.5L6.5 5.5" stroke="#ffe94a" stroke-width="0.9"/><rect x="7.7" y="0.3" width="1.4" height="2.4" fill="#e81818"/><path d="M1.2 7.5L6.2 2.2L11.6 7.5" fill="none" stroke="#000" stroke-width="1.8"/><path d="M0.9 6.3L6.2 0.9L10.5 5.5" fill="none" stroke="#ffd92a" stroke-width="1.4"/><path d="M2.7 7V11.9H10.3V6.5" fill="none" stroke="#000" stroke-width="1.1"/><rect x="4.9" y="8.3" width="2" height="3.2" fill="#f09a00"/></svg>
<div class="a" style="left:12px;top:443px;width:736px;height:26px;background:#fff"></div>
<div class="a" style="left:14px;top:445px;width:22px;height:22px;background:linear-gradient(to bottom,#ff8080 0,#ff0000 7px);overflow:hidden;display:flex;justify-content:center"><div style="white-space:pre;line-height:1;margin-top:7px;font-size:11px;color:#2a0000;flex:none">Хп-Р</div></div>
<div class="t" style="left:63px;top:451px;color:#000">Хорово пеене...</div>
<div class="t" style="left:163px;top:451px;color:#000">Тестов Красимиров</div>
<div class="t" style="left:324px;top:451px;color:#000">1 а</div>
<div class="t" style="left:455px;top:451px;color:#000">1</div>
<div class="t" style="left:505px;top:451px;color:#000">1</div>
<svg class="a" style="left:565px;top:447px" width="13" height="13" viewBox="0 0 13 13"><rect x="2.3" y="5.5" width="7.6" height="6.3" fill="#fffce8"/><path d="M3.5 9L4.5 8M8 9.5L8.8 8.5M5.5 6.5L6.5 5.5" stroke="#ffe94a" stroke-width="0.9"/><rect x="7.7" y="0.3" width="1.4" height="2.4" fill="#e81818"/><path d="M1.2 7.5L6.2 2.2L11.6 7.5" fill="none" stroke="#000" stroke-width="1.8"/><path d="M0.9 6.3L6.2 0.9L10.5 5.5" fill="none" stroke="#ffd92a" stroke-width="1.4"/><path d="M2.7 7V11.9H10.3V6.5" fill="none" stroke="#000" stroke-width="1.1"/><rect x="4.9" y="8.3" width="2" height="3.2" fill="#f09a00"/></svg>
<div class="a" style="left:12px;top:469px;width:736px;height:20px;background:#f6f6f6"></div>
<div class="a" style="left:14px;top:471px;width:22px;height:18px;background:linear-gradient(to bottom,#ff8080 0,#ff0000 7px);overflow:hidden;display:flex;justify-content:center"><div style="white-space:pre;line-height:1;margin-top:7px;font-size:11px;color:#2a0000;flex:none">Хп-Р</div></div>
<div class="t" style="left:63px;top:477px;color:#000">Хорово пеене...</div>
<div class="t" style="left:163px;top:477px;color:#000">Тестов Красимиров</div>
<div class="t" style="left:324px;top:477px;color:#000">2 в</div>
<div class="t" style="left:455px;top:477px;color:#000">1</div>
<div class="t" style="left:505px;top:477px;color:#000">1</div>
<svg class="a" style="left:565px;top:473px" width="13" height="13" viewBox="0 0 13 13"><rect x="2.3" y="5.5" width="7.6" height="6.3" fill="#fffce8"/><path d="M3.5 9L4.5 8M8 9.5L8.8 8.5M5.5 6.5L6.5 5.5" stroke="#ffe94a" stroke-width="0.9"/><rect x="7.7" y="0.3" width="1.4" height="2.4" fill="#e81818"/><path d="M1.2 7.5L6.2 2.2L11.6 7.5" fill="none" stroke="#000" stroke-width="1.8"/><path d="M0.9 6.3L6.2 0.9L10.5 5.5" fill="none" stroke="#ffd92a" stroke-width="1.4"/><path d="M2.7 7V11.9H10.3V6.5" fill="none" stroke="#000" stroke-width="1.1"/><rect x="4.9" y="8.3" width="2" height="3.2" fill="#f09a00"/></svg>
<div class="a" style="left:858px;top:80px;width:17px;height:409px;background:#f0f0f0"></div>
<div class="a" style="left:859px;top:97px;width:15px;height:350px;background:#cdcdcd"></div>
<svg class="a" style="left:861px;top:476px" width="10" height="8" viewBox="0 0 10 8"><path d="M1.2 1.5L5 5.5L8.8 1.5" fill="none" stroke="#404040" stroke-width="2"/></svg>
<div class="btn btnc" style="left:7px;top:506px;width:90px;height:26px">Нов час</div>
<div class="btn btnc" style="left:108px;top:506px;width:94px;height:26px">Корекция на часа</div>
<div class="btn btnc" style="left:211px;top:506px;width:91px;height:26px">Премахни</div>
<div class="btn btnc" style="left:403px;top:506px;width:91px;height:26px">Копирай към</div>
<div class="btn btnc" style="left:505px;top:506px;width:91px;height:26px">Добави други</div>
<div class="btn btnc" style="left:604px;top:506px;width:157px;height:26px">Персонализирани полета</div>
<div class="btn btnc" style="left:775px;top:506px;width:100px;height:26px">Затвори</div>
<svg class="a" style="left:868px;top:532px" width="12" height="12" viewBox="0 0 12 12"><g fill="#b0b0b0"><rect x="8" y="8" width="2" height="2"/><rect x="8" y="4" width="2" height="2"/><rect x="4" y="8" width="2" height="2"/><rect x="8" y="0" width="2" height="2"/><rect x="4" y="4" width="2" height="2"/><rect x="0" y="8" width="2" height="2"/></g></svg>
</div>
<div class="dlg" style="left:781px;top:370px;width:625px;height:550px;border:1px solid #1883d7;box-shadow:0 5px 16px 1px rgba(0,0,0,0.36)">
<div class="a" style="left:0;top:0;width:623px;height:25px;background:#fff"></div>
<div class="t" style="left:4px;top:7px;font-size:11px">Час</div>
<svg class="a" style="left:602px;top:6px" width="12" height="12" viewBox="0 0 12 12"><path d="M0.5 0.5L11.5 11.5M11.5 0.5L0.5 11.5" stroke="#000" stroke-width="1.1"/></svg>
<div class="grp" style="left:11px;top:46px;width:596px;height:73px"></div>
<div class="grp" style="left:11px;top:125px;width:596px;height:73px"></div>
<div class="grp" style="left:11px;top:205px;width:596px;height:91px"></div>
<div class="grp" style="left:11px;top:301px;width:596px;height:94px"></div>
<div class="grp" style="left:11px;top:403px;width:596px;height:96px"></div>
<svg class="a" style="left:24px;top:54px" width="48" height="42" viewBox="0 0 48 42" preserveAspectRatio="none"><path d="M11.5 20V34.5C11.5 41.5 36.5 41.5 36.5 34.5V20Z" fill="#383b42"/><path d="M24 1L47 16L24 31.5L1 16Z" fill="#585b61" stroke="#1f262c" stroke-width="1.3" stroke-linejoin="round"/><path d="M24 16L5.5 19.5V33" fill="none" stroke="#f0a020" stroke-width="1.5" stroke-linecap="round"/><path d="M5.5 32L3 36.5L5.5 40.5L8 36.5Z" fill="#ffd080" stroke="#f0a020" stroke-width="0.8"/></svg>
<svg class="a" style="left:29px;top:131px" width="39" height="44" viewBox="0 0 38 43" preserveAspectRatio="none"><rect x="0.5" y="0.5" width="37" height="42" rx="1.5" fill="#8ab4f0" stroke="#5b84c8" stroke-width="0.9"/><path d="M0.5 2C0.5 1 1 0.5 2 0.5H6V42.5H2C1 42.5 0.5 42 0.5 41Z" fill="#4f7cc0"/><rect x="11.5" y="9.5" width="18.5" height="12" fill="#fff"/><path d="M14 13.5H27.5M14 17H27.5" stroke="#b8cbe8" stroke-width="1.2"/></svg>
<svg class="a" style="left:24px;top:218px" width="49" height="48" viewBox="0 0 48 48" preserveAspectRatio="none">
<path d="M0.7 36.5A11.5 10.5 0 0 1 23.5 36.5Z" fill="#f5a3a5" stroke="#c01818" stroke-width="1"/>
<path d="M5 24C3 22 6 14 6 10C6 3 11 0 15.5 0.5C20 0 25 3 26 9L24 24L14 27Z" fill="#a56b42"/>
<path d="M9.5 12C9.5 7 12 5 16 5C20 5 22.5 7 22.5 12C22.5 19 20 22 19 24V27H13V24C11 22 9.5 19 9.5 12Z" fill="#eec070"/>
<path d="M10.2 47.3A19 13.5 0 0 1 48 47.3Z" fill="#b9e0bb" stroke="#0f8a1a" stroke-width="1"/>
<path d="M24.5 30H34V36C34 39 24.5 39 24.5 36Z" fill="#f5cc80" stroke="#c89848" stroke-width="0.6"/>
<path d="M20.5 19C20.5 12 24 10.5 29 10.5C34 10.5 38 12 38 19C38 27 34 32.5 29.2 32.5C24.5 32.5 20.5 27 20.5 19Z" fill="#ffd98c" stroke="#c89848" stroke-width="0.7"/>
<path d="M19 22C17 13 19 4.5 28 4C34 3 41 7 40 15C40 18 39.5 20 38.5 22C38 17 36.5 14 34 11.5C31 14 24 13 21.5 16C20.5 18 20 20 19 22Z" fill="#f0c878" stroke="#c89848" stroke-width="0.5"/>
</svg>
<svg class="a" style="left:26px;top:318px" width="44" height="44" viewBox="0 0 44 44"><rect x="0.6" y="0.6" width="42.8" height="42.8" rx="2" fill="#fff" stroke="#b4bccc" stroke-width="1.2"/><path d="M0.6 2.5C0.6 1.5 1.5 0.6 2.5 0.6H41.5C42.5 0.6 43.4 1.5 43.4 2.5V7.5H0.6Z" fill="#f58a8e" stroke="#e06a70" stroke-width="0.8"/><path d="M1.2 38.5H42.8V41.5C42.8 42.3 42.3 42.8 41.5 42.8H2.5C1.7 42.8 1.2 42.3 1.2 41.5Z" fill="#dde6f0"/><g fill="#a8bcd8"><rect x="14" y="14.5" width="2" height="2"/><rect x="19" y="14.5" width="2" height="2"/><rect x="24" y="14.5" width="2" height="2"/><rect x="29" y="14.5" width="2" height="2"/><rect x="34" y="14.5" width="2" height="2"/><rect x="9" y="19.25" width="2" height="2"/><rect x="14" y="19.25" width="2" height="2"/><rect x="19" y="19.25" width="2" height="2"/><rect x="24" y="19.25" width="2" height="2"/><rect x="29" y="19.25" width="2" height="2"/><rect x="34" y="19.25" width="2" height="2"/><rect x="9" y="24" width="2" height="2"/><rect x="14" y="24" width="2" height="2"/><rect x="19" y="24" width="2" height="2"/><rect x="24" y="24" width="2" height="2"/><rect x="29" y="24" width="2" height="2"/><rect x="34" y="24" width="2" height="2"/><rect x="9" y="28.75" width="2" height="2"/><rect x="14" y="28.75" width="2" height="2"/><rect x="19" y="28.75" width="2" height="2"/><rect x="24" y="28.75" width="2" height="2"/><rect x="29" y="28.75" width="2" height="2"/></g></svg>
<svg class="a" style="left:31px;top:422px" width="34" height="48" viewBox="0 0 34 48" preserveAspectRatio="none"><rect x="0.4" y="2.6" width="33.2" height="43" fill="#ffc8a0" stroke="#c48a66" stroke-width="0.8"/><rect x="17" y="5" width="6" height="40.5" fill="#50424a"/><rect x="23" y="5" width="8.2" height="40.5" fill="#74606a"/><path d="M2.4 3.6L16.9 0.3V47.7L2.4 44.9Z" fill="#ffc8a0" stroke="#b87a56" stroke-width="0.8" stroke-linejoin="round"/><path d="M15.9 0.8V47.3" stroke="#ffd9bd" stroke-width="1"/><circle cx="12.7" cy="24" r="0.9" fill="#b87a56"/></svg>
<div class="t" style="left:116px;top:60px">Учител</div>
<div class="t" style="left:116px;top:141px">Предмет</div>
<div class="t" style="left:116px;top:219px">Клас</div>
<div class="t" style="left:116px;top:320px">Часове/седмица</div>
<div class="combo" style="left:116px;top:75px;width:234px;height:24px"></div>
<div class="t" style="left:121px;top:81px">Тестов Красимиров (Т.Красимиров)</div>
<svg class="a" style="left:335px;top:85px" width="10" height="6" viewBox="0 0 10 6"><path d="M0.7 0.7L5 5L9.3 0.7" fill="none" stroke="#404040" stroke-width="1.1"/></svg>
<div class="combo" style="left:116px;top:155px;width:234px;height:21px"></div>
<svg class="a" style="left:335px;top:163px" width="10" height="6" viewBox="0 0 10 6"><path d="M0.7 0.7L5 5L9.3 0.7" fill="none" stroke="#404040" stroke-width="1.1"/></svg>
<div class="combo" style="left:116px;top:233px;width:152px;height:21px"></div>
<svg class="a" style="left:253px;top:241px" width="10" height="6" viewBox="0 0 10 6"><path d="M0.7 0.7L5 5L9.3 0.7" fill="none" stroke="#404040" stroke-width="1.1"/></svg>
<div class="combo" style="left:116px;top:336px;width:152px;height:23px"></div>
<div class="t" style="left:121px;top:342px">1</div>
<svg class="a" style="left:253px;top:345px" width="10" height="6" viewBox="0 0 10 6"><path d="M0.7 0.7L5 5L9.3 0.7" fill="none" stroke="#404040" stroke-width="1.1"/></svg>
<div class="btn" style="left:468px;top:74px;width:132px;height:24px;padding-left:3px;padding-top:2px;background:#f0f0f0">Други учители</div>
<div class="btn" style="left:468px;top:233px;width:132px;height:24px;padding-left:3px;padding-top:2px;background:#f0f0f0">Събрани класове</div>
<div class="t" style="left:479px;top:340px">Повече седмици/сроков</div>
<div class="a" style="left:116px;top:420px;width:13px;height:13px;background:#fff;border:1px solid #333"></div>
<svg class="a" style="left:117px;top:421px" width="11" height="11" viewBox="0 0 11 11"><path d="M1.5 5.5L4.3 8.3L9.5 2.5" fill="none" stroke="#000" stroke-width="1.1"/></svg>
<div class="a" style="left:116px;top:439px;width:13px;height:13px;background:#fff;border:1px solid #333"></div>
<div class="t" style="left:132px;top:422px">Основна класна стая</div>
<div class="t" style="left:132px;top:441px">Споделена стая</div>
<div class="t" style="left:311px;top:420px;width:100px;text-align:right">Класни с</div><div class="t" style="left:411px;top:420px">таи на учители</div>
<div class="t" style="left:311px;top:440px;width:100px;text-align:right">Класни с</div><div class="t" style="left:411px;top:440px">таи по предмети</div>
<div class="btn" style="left:116px;top:459px;width:342px;height:24px;padding-left:3px;padding-top:2px;background:#f0f0f0">Други стаи на разположение</div>
<div class="btn" style="left:468px;top:459px;width:132px;height:24px;padding-left:3px;padding-top:2px;background:#f0f0f0">Повече класни стаи</div>
<div class="btn" style="left:11px;top:513px;width:113px;height:24px;padding-left:3px;padding-top:2px;background:#f0f0f0">Откажи</div>
<div class="btn" style="left:137px;top:513px;width:114px;height:24px;padding-left:3px;padding-top:2px;background:#f0f0f0">Помощ</div>
<div class="btn" style="left:267px;top:513px;width:144px;height:24px;padding-left:3px;padding-top:2px;background:#f0f0f0">Персонализирани полета</div>
<div class="btn btnc" style="left:433px;top:509px;width:180px;height:27px;border:2px solid #0078d7">OK</div>
<div class="combo" style="left:309px;top:334px;width:102px;height:22px;border-color:#0078d7"></div>
<div class="a" style="left:393px;top:335px;width:17px;height:20px;background:#cce4f7;border-left:1px solid #0078d7"></div>
<svg class="a" style="left:397px;top:343px" width="10" height="6" viewBox="0 0 10 6"><path d="M0.7 0.7L5 5L9.3 0.7" fill="none" stroke="#404040" stroke-width="1.1"/></svg>
<div class="t" style="left:313px;top:339px">Единичен</div>
<div class="a" style="left:309px;top:358px;width:102px;height:130px;background:#fff;border:1px solid #0078d7;box-shadow:1px 2px 3px rgba(0,0,0,0.25)"></div>
<div class="a" style="left:310px;top:359px;width:100px;height:16px;background:#cce4f7"></div>
<div class="t" style="left:312px;top:361px">Единичен</div>
<div class="t" style="left:312px;top:377px">Двоен</div>
<div class="t" style="left:312px;top:393px">Троен</div>
<div class="t" style="left:312px;top:409px">4</div>
<div class="t" style="left:312px;top:425px">5</div>
<div class="t" style="left:312px;top:441px">6</div>
<div class="t" style="left:312px;top:457px">7</div>
<div class="t" style="left:312px;top:473px">8</div>
</div>
<svg class="a" style="left:0;top:0;pointer-events:none" width="1456" height="1047" viewBox="0 0 1456 1047">
<rect x="554.5" y="46.5" width="60" height="81" fill="none" stroke="#e81a24" stroke-width="3"/>
<rect x="153.5" y="244.5" width="326" height="27" fill="none" stroke="#e81a24" stroke-width="3"/>
<rect x="610.5" y="356.5" width="147" height="36" fill="none" stroke="#e81a24" stroke-width="3"/>
<rect x="633.5" y="553.5" width="55" height="317" fill="none" stroke="#e81a24" stroke-width="3"/>
<rect x="242.5" y="980.5" width="100" height="36" fill="none" stroke="#e81a24" stroke-width="3"/>
<rect x="1081.5" y="699.5" width="124" height="29" fill="none" stroke="#e81a24" stroke-width="3"/>
<rect x="1212.5" y="876.5" width="187" height="33" fill="none" stroke="#e81a24" stroke-width="3"/>
<path d="M597.1 381C564.7 404.2 487.6 414 452.5 544.8" fill="none" stroke="#e81a24" stroke-width="2.8" stroke-linecap="round"/>
<path d="M449.7 532.8L452.5 544.8L464.4 536" fill="none" stroke="#e81a24" stroke-width="2.8" stroke-linecap="round" stroke-linejoin="round"/>
<path d="M717.1 862.9C762.4 772.7 816.6 758.7 878.8 739.6" fill="none" stroke="#e81a24" stroke-width="2.8" stroke-linecap="round"/>
<path d="M866.5 736.5L878.8 739.6L873.4 749" fill="none" stroke="#e81a24" stroke-width="2.8" stroke-linecap="round" stroke-linejoin="round"/>
</svg>
</body></html>
